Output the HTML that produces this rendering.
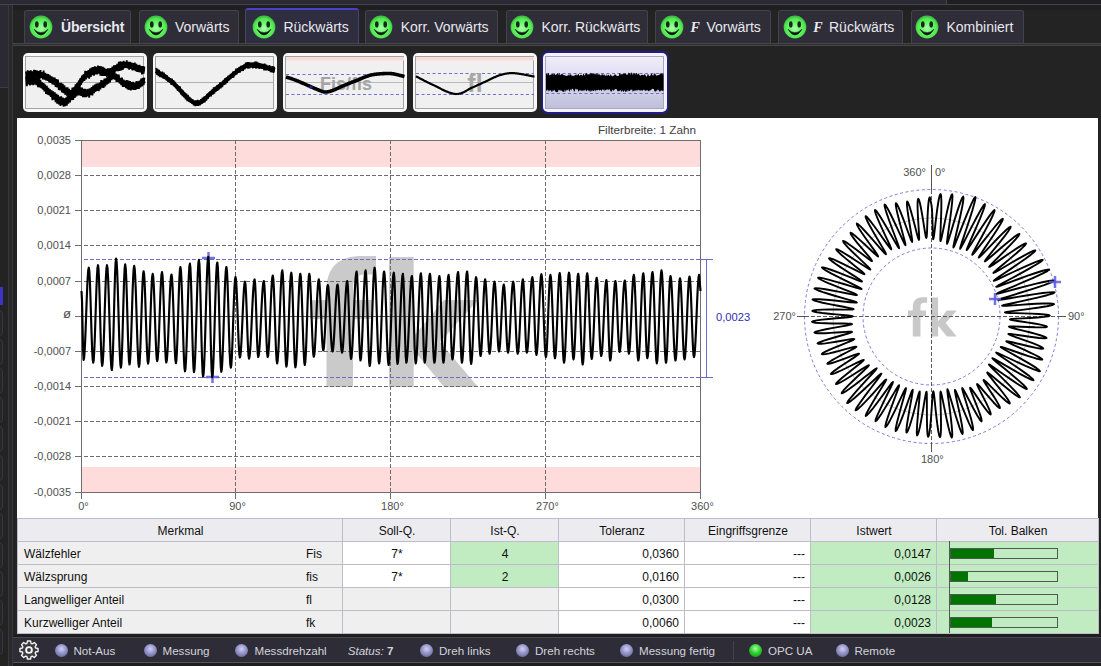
<!DOCTYPE html>
<html><head><meta charset="utf-8">
<style>
*{box-sizing:border-box}
html,body{margin:0;padding:0}
body{width:1101px;height:666px;overflow:hidden;background:#232323;position:relative;font-family:"Liberation Sans",sans-serif}
.a{position:absolute}
.tab{position:absolute;top:10px;height:33px;background:#2e2d38;border:1px solid #44434b;border-bottom:none;border-radius:3px 3px 0 0}
.tab.sel{top:8px;height:35px;background:#2f2d40;border-color:#45427a;border-top:2px solid #4a40c8}
.tl{position:absolute;top:19px;font-size:14px;color:#e8e8ee;white-space:nowrap;line-height:16px}
.smile{position:absolute;top:15px;width:23px;height:23px}
.th{position:absolute;top:53px;width:124px;height:59px;border-radius:5px;background:#f7f7f7}
.thi{position:absolute;left:3px;top:3px;width:118px;height:53px;border:1px solid #a4a4a4;background:#f0f0f0;overflow:hidden}
.st{position:absolute;top:644px;font-size:11.6px;color:#d4d4dc;white-space:nowrap;line-height:14px}
.led{position:absolute;top:643.5px;width:13px;height:13px;border-radius:50%;background:radial-gradient(circle at 50% 38%,#cfd0f4 0%,#9a9ad0 40%,#6a6a98 80%,#4a4a68 100%)}
.ax{position:absolute;font-size:11px;color:#505050;white-space:nowrap;line-height:12px}
table{border-collapse:collapse;position:absolute;left:17px;top:518px;width:1081px;table-layout:fixed;font-size:12px;color:#101010}
td{border:1px solid #bdbdc9;height:23px;padding:1px 5px 0 6px;white-space:nowrap;line-height:14px}
</style></head>
<body>
<!-- top strip -->
<div class="a" style="left:0;top:0;width:946px;height:4px;background:#2b2a32"></div>
<div class="a" style="left:0;top:4px;width:1101px;height:1px;background:#45444c"></div>
<div class="a" style="left:946px;top:0;width:1px;height:4px;background:#45444c"></div>
<div class="a" style="left:947px;top:0;width:154px;height:4px;background:#1f1f21"></div>
<div class="a" style="left:0;top:5px;width:1101px;height:5px;background:#1f1f22"></div>
<!-- left strip -->
<div class="a" style="left:0;top:5px;width:8px;height:82px;background:#2b2a33"></div>
<div class="a" style="left:0;top:87px;width:8px;height:1px;background:#3c3c40"></div>
<div class="a" style="left:0;top:88px;width:8px;height:578px;background:#232324"></div>
<div class="a" style="left:8px;top:5px;width:1px;height:661px;background:#38383c"></div>
<div class="a" style="left:9px;top:5px;width:3px;height:661px;background:#29292c"></div>
<div class="a" style="left:12px;top:5px;width:1px;height:661px;background:#38383c"></div>
<div class="a" style="left:-5px;top:310.0px;width:8px;height:26px;border:1px solid #38383c;border-radius:4px;background:#262628"></div>
<div class="a" style="left:-5px;top:339.0px;width:8px;height:26px;border:1px solid #38383c;border-radius:4px;background:#262628"></div>
<div class="a" style="left:-5px;top:368.0px;width:8px;height:26px;border:1px solid #38383c;border-radius:4px;background:#262628"></div>
<div class="a" style="left:-5px;top:397.0px;width:8px;height:26px;border:1px solid #38383c;border-radius:4px;background:#262628"></div>
<div class="a" style="left:-5px;top:426.0px;width:8px;height:26px;border:1px solid #38383c;border-radius:4px;background:#262628"></div>
<div class="a" style="left:-5px;top:455.0px;width:8px;height:26px;border:1px solid #38383c;border-radius:4px;background:#262628"></div>
<div class="a" style="left:-5px;top:484.0px;width:8px;height:26px;border:1px solid #38383c;border-radius:4px;background:#262628"></div>
<div class="a" style="left:-5px;top:513.0px;width:8px;height:26px;border:1px solid #38383c;border-radius:4px;background:#262628"></div>
<div class="a" style="left:-5px;top:542.0px;width:8px;height:26px;border:1px solid #38383c;border-radius:4px;background:#262628"></div>
<div class="a" style="left:-5px;top:571.0px;width:8px;height:26px;border:1px solid #38383c;border-radius:4px;background:#262628"></div>
<div class="a" style="left:-5px;top:600.0px;width:8px;height:26px;border:1px solid #38383c;border-radius:4px;background:#262628"></div>
<div class="a" style="left:-5px;top:629.0px;width:8px;height:26px;border:1px solid #38383c;border-radius:4px;background:#262628"></div>
<div class="a" style="left:0;top:287px;width:3px;height:18px;background:#3c34c8"></div>
<!-- tabs -->
<svg width="0" height="0" style="position:absolute"><defs><radialGradient id="sg" cx="0.5" cy="0.55" r="0.5"><stop offset="0" stop-color="#a8ffa8"/><stop offset="0.55" stop-color="#66f466"/><stop offset="0.88" stop-color="#50e450"/><stop offset="1" stop-color="#40c040"/></radialGradient></defs></svg>
<div class="tab" style="left:24px;width:107px"></div>
<svg class="a" style="left:27.5px;top:13.6px" width="26" height="26" viewBox="0 0 26 26"><circle cx="13" cy="13" r="11.4" fill="url(#sg)"/><ellipse cx="8.8" cy="10.4" rx="1.8" ry="3.1" fill="#102814"/><ellipse cx="17.2" cy="10.4" rx="1.8" ry="3.1" fill="#102814"/><path d="M6,15.2 Q13,27 20,15.2 Q13,22.2 6,15.2Z" fill="#0a160c" stroke="#0a160c" stroke-width="0.5" stroke-linejoin="round"/></svg>
<div class="tl" style="left:61px;font-weight:bold;font-size:14px;letter-spacing:-0.15px;">Übersicht</div>
<div class="tab" style="left:139px;width:100px"></div>
<svg class="a" style="left:143px;top:13.6px" width="26" height="26" viewBox="0 0 26 26"><circle cx="13" cy="13" r="11.4" fill="url(#sg)"/><ellipse cx="8.8" cy="10.4" rx="1.8" ry="3.1" fill="#102814"/><ellipse cx="17.2" cy="10.4" rx="1.8" ry="3.1" fill="#102814"/><path d="M6,15.2 Q13,27 20,15.2 Q13,22.2 6,15.2Z" fill="#0a160c" stroke="#0a160c" stroke-width="0.5" stroke-linejoin="round"/></svg>
<div class="tl" style="left:175px;">Vorwärts</div>
<div class="tab sel" style="left:245px;width:114px"></div>
<svg class="a" style="left:251px;top:13.6px" width="26" height="26" viewBox="0 0 26 26"><circle cx="13" cy="13" r="11.4" fill="url(#sg)"/><ellipse cx="8.8" cy="10.4" rx="1.8" ry="3.1" fill="#102814"/><ellipse cx="17.2" cy="10.4" rx="1.8" ry="3.1" fill="#102814"/><path d="M6,15.2 Q13,27 20,15.2 Q13,22.2 6,15.2Z" fill="#0a160c" stroke="#0a160c" stroke-width="0.5" stroke-linejoin="round"/></svg>
<div class="tl" style="left:283.4px;">Rückwärts</div>
<div class="tab" style="left:364.6px;width:133.4px"></div>
<svg class="a" style="left:368px;top:13.6px" width="26" height="26" viewBox="0 0 26 26"><circle cx="13" cy="13" r="11.4" fill="url(#sg)"/><ellipse cx="8.8" cy="10.4" rx="1.8" ry="3.1" fill="#102814"/><ellipse cx="17.2" cy="10.4" rx="1.8" ry="3.1" fill="#102814"/><path d="M6,15.2 Q13,27 20,15.2 Q13,22.2 6,15.2Z" fill="#0a160c" stroke="#0a160c" stroke-width="0.5" stroke-linejoin="round"/></svg>
<div class="tl" style="left:400.7px;">Korr. Vorwärts</div>
<div class="tab" style="left:505.5px;width:142.5px"></div>
<svg class="a" style="left:509.4px;top:13.6px" width="26" height="26" viewBox="0 0 26 26"><circle cx="13" cy="13" r="11.4" fill="url(#sg)"/><ellipse cx="8.8" cy="10.4" rx="1.8" ry="3.1" fill="#102814"/><ellipse cx="17.2" cy="10.4" rx="1.8" ry="3.1" fill="#102814"/><path d="M6,15.2 Q13,27 20,15.2 Q13,22.2 6,15.2Z" fill="#0a160c" stroke="#0a160c" stroke-width="0.5" stroke-linejoin="round"/></svg>
<div class="tl" style="left:541.5px;">Korr. Rückwärts</div>
<div class="tab" style="left:655px;width:116px"></div>
<svg class="a" style="left:659px;top:13.6px" width="26" height="26" viewBox="0 0 26 26"><circle cx="13" cy="13" r="11.4" fill="url(#sg)"/><ellipse cx="8.8" cy="10.4" rx="1.8" ry="3.1" fill="#102814"/><ellipse cx="17.2" cy="10.4" rx="1.8" ry="3.1" fill="#102814"/><path d="M6,15.2 Q13,27 20,15.2 Q13,22.2 6,15.2Z" fill="#0a160c" stroke="#0a160c" stroke-width="0.5" stroke-linejoin="round"/></svg>
<div class="tl" style="left:706.4px;">Vorwärts</div>
<div class="tab" style="left:778px;width:125px"></div>
<svg class="a" style="left:781.5px;top:13.6px" width="26" height="26" viewBox="0 0 26 26"><circle cx="13" cy="13" r="11.4" fill="url(#sg)"/><ellipse cx="8.8" cy="10.4" rx="1.8" ry="3.1" fill="#102814"/><ellipse cx="17.2" cy="10.4" rx="1.8" ry="3.1" fill="#102814"/><path d="M6,15.2 Q13,27 20,15.2 Q13,22.2 6,15.2Z" fill="#0a160c" stroke="#0a160c" stroke-width="0.5" stroke-linejoin="round"/></svg>
<div class="tl" style="left:829px;">Rückwärts</div>
<div class="tab" style="left:911px;width:113px"></div>
<svg class="a" style="left:914.3px;top:13.6px" width="26" height="26" viewBox="0 0 26 26"><circle cx="13" cy="13" r="11.4" fill="url(#sg)"/><ellipse cx="8.8" cy="10.4" rx="1.8" ry="3.1" fill="#102814"/><ellipse cx="17.2" cy="10.4" rx="1.8" ry="3.1" fill="#102814"/><path d="M6,15.2 Q13,27 20,15.2 Q13,22.2 6,15.2Z" fill="#0a160c" stroke="#0a160c" stroke-width="0.5" stroke-linejoin="round"/></svg>
<div class="tl" style="left:946.5px;">Kombiniert</div>
<div class="tl" style="left:690.5px;top:19.5px;font-family:Liberation Serif;font-style:italic;font-weight:bold;font-size:14px">F</div>
<div class="tl" style="left:813.3px;top:19.5px;font-family:Liberation Serif;font-style:italic;font-weight:bold;font-size:14px">F</div>
<div class="a" style="left:13px;top:43px;width:1088px;height:1px;background:#45454a"></div>
<div class="a" style="left:13px;top:44px;width:1088px;height:1px;background:#2e2e31"></div>
<div class="a" style="left:13px;top:45px;width:1088px;height:1px;background:#45454a"></div>
<!-- thumbnails -->
<svg class="a" style="left:0;top:0" width="700" height="120" viewBox="0 0 700 120">
<defs><linearGradient id="selg" x1="0" y1="0" x2="0" y2="1"><stop offset="0" stop-color="#f2eefa"/><stop offset="1" stop-color="#bfbfdc"/></linearGradient></defs>
<rect x="23" y="53" width="124" height="59" rx="5" fill="#f8f8f8"/>
<rect x="25.5" y="56.5" width="118" height="52" fill="#f0f0f0" stroke="#a4a4a4" stroke-width="1"/>
<rect x="153" y="53" width="124" height="59" rx="5" fill="#f8f8f8"/>
<rect x="155.5" y="56.5" width="118" height="52" fill="#f0f0f0" stroke="#a4a4a4" stroke-width="1"/>
<rect x="283" y="53" width="124" height="59" rx="5" fill="#f8f8f8"/>
<rect x="285.5" y="56.5" width="118" height="52" fill="#f0f0f0" stroke="#a4a4a4" stroke-width="1"/>
<rect x="413" y="53" width="124" height="59" rx="5" fill="#f8f8f8"/>
<rect x="415.5" y="56.5" width="118" height="52" fill="#f0f0f0" stroke="#a4a4a4" stroke-width="1"/>
<rect x="541.5" y="51" width="127" height="63" rx="6.5" fill="#221c8a"/>
<rect x="543" y="53" width="124" height="59" rx="5" fill="#f4f2fc"/>
<rect x="545.5" y="56.5" width="118" height="52" fill="url(#selg)" stroke="#a8a8bc" stroke-width="1"/>
<line x1="26" y1="82.5" x2="144" y2="82.5" stroke="#b0b0b0" stroke-width="1"/>
<path d="M26,71.53 26.8,79.48 27.6,70.24 28.4,78.25 29.2,70.72 30,78.58 30.8,70.35 31.6,79.2 32.4,71.41 33.2,77.64 34,69.9 34.8,78.42 35.6,70.03 36.4,77.56 37.2,70.68 38,79.04 38.8,71.18 39.6,79.59 40.4,69.98 41.2,77.98 42,72.02 42.8,79.36 43.6,70.64 44.4,79.58 45.2,72.73 46,80.4 46.8,73.92 47.6,80.87 48.4,74 49.2,82.32 50,75.34 50.8,82.78 51.6,76.43 52.4,84.35 53.2,77.44 54,84.66 54.8,77.55 55.6,86.95 56.4,79.16 57.2,87.42 58,79.69 58.8,90.04 59.6,82.74 60.4,90.31 61.2,82.87 62,92.4 62.8,83.76 63.6,93.11 64.4,85.21 65.2,94.77 66,87.37 66.8,95.72 67.6,87.33 68.4,97.29 69.2,88.94 70,97.29 70.8,89.98 71.6,96.23 72.4,87.63 73.2,95.36 74,87.34 74.8,93.85 75.6,84.35 76.4,92.1 77.2,83 78,89.54 78.8,80.47 79.6,87.82 80.4,77.98 81.2,84.57 82,75.61 82.8,81.52 83.6,74.36 84.4,81 85.2,70.91 86,79.47 86.8,71 87.6,77.71 88.4,69.98 89.2,78.57 90,68.66 90.8,76.8 91.6,67.46 92.4,75.1 93.2,67.13 94,75.69 94.8,66.37 95.6,74.29 96.4,66.76 97.2,74.42 98,65.5 98.8,73.57 99.6,66.17 100.4,75.57 101.2,66.37 102,75.83 102.8,66.94 103.6,75.81 104.4,67.84 105.2,75.99 106,69.17 106.8,77.13 107.6,68.31 108.4,75.84 109.2,68.32 110,76.07 110.8,68.05 111.6,75.01 112.4,66.7 113.2,74.4 114,65.26 114.8,72.75 115.6,65.17 116.4,71.17 117.2,63.96 118,71.12 118.8,61.89 119.6,70.89 120.4,61.39 121.2,70.35 122,61.96 122.8,69.95 123.6,60.75 124.4,68.14 125.2,61.87 126,67.92 126.8,60.41 127.6,68.51 128.4,61.93 129.2,69.57 130,61.83 130.8,68.89 131.6,62.67 132.4,70.29 133.2,63.14 134,70.27 134.8,62.56 135.6,71.17 136.4,63.91 137.2,71.8 138,65.1 138.8,72.23 139.6,64.93 140.4,72.46 141.2,66.18 142,74.52 142.8,66.01 143.6,73.77 144.4,66.45" fill="none" stroke="#000" stroke-width="1.8" stroke-linejoin="miter" stroke-miterlimit="2"/>
<path d="M26,76.49 26.8,86.25 27.6,78.17 28.4,84.36 29.2,76.44 30,85.51 30.8,76.64 31.6,84.55 32.4,76.7 33.2,85.13 34,76.79 34.8,84.35 35.6,77.31 36.4,85.19 37.2,77.29 38,87.16 38.8,77.79 39.6,87.39 40.4,80.08 41.2,88.24 42,82.4 42.8,89.3 43.6,83.08 44.4,91.38 45.2,84.67 46,93.94 46.8,85.84 47.6,94.77 48.4,87.94 49.2,95.23 50,89.29 50.8,96.96 51.6,90.38 52.4,100.09 53.2,91.39 54,99.73 54.8,92.2 55.6,102.18 56.4,93.71 57.2,103.56 58,94.78 58.8,104.43 59.6,96.66 60.4,105.81 61.2,96.38 62,105.03 62.8,97.55 63.6,106.7 64.4,98.34 65.2,106.1 66,97.6 66.8,105.65 67.6,95.87 68.4,103.66 69.2,94.55 70,102.36 70.8,92.14 71.6,100.21 72.4,91.5 73.2,99.85 74,89.95 74.8,97.79 75.6,89.84 76.4,96.46 77.2,88 78,95.45 78.8,87.16 79.6,95.52 80.4,87.29 81.2,95.95 82,87.67 82.8,97.23 83.6,88.96 84.4,97.05 85.2,88.74 86,97.25 86.8,89.46 87.6,96.46 88.4,88.93 89.2,97.64 90,88.25 90.8,95.27 91.6,87 92.4,95.52 93.2,85.63 94,93.19 94.8,84.69 95.6,91.69 96.4,83.69 97.2,90.99 98,83.45 98.8,91.11 99.6,82.61 100.4,89.32 101.2,80.03 102,87.68 102.8,80.23 103.6,87.86 104.4,78.7 105.2,86.42 106,78.35 106.8,84.55 107.6,76.84 108.4,83.74 109.2,75.29 110,82.32 110.8,73.41 111.6,80.27 112.4,72.48 113.2,79.05 114,71.17 114.8,79.56 115.6,73.44 116.4,81.83 117.2,74.37 118,81.93 118.8,74.58 119.6,83.54 120.4,77.79 121.2,85.09 122,77.66 122.8,86.86 123.6,79.64 124.4,87.01 125.2,80.72 126,88.11 126.8,80.07 127.6,89.43 128.4,80.46 129.2,90.03 130,80.99 130.8,90.3 131.6,82.07 132.4,89.56 133.2,81.84 134,89.81 134.8,82.94 135.6,89.96 136.4,81.19 137.2,89.01 138,81.31 138.8,88.89 139.6,80.59 140.4,87.35 141.2,78.52 142,86.29 142.8,77.86 143.6,85.2 144.4,77.64" fill="none" stroke="#000" stroke-width="1.8" stroke-linejoin="miter" stroke-miterlimit="2"/>
<path d="M26,74.8 26.27,74.8 26.58,74.79 26.93,74.78 27.31,74.77 27.72,74.76 28.16,74.74 28.63,74.73 29.12,74.71 29.64,74.69 30.17,74.67 30.72,74.65 31.28,74.63 31.85,74.62 32.44,74.6 33.03,74.59 33.62,74.57 34.21,74.57 34.81,74.56 35.39,74.56 35.98,74.56 36.55,74.56 37.11,74.57 37.66,74.59 38.19,74.61 38.7,74.63 39.19,74.66 39.65,74.7 40.09,74.75 40.5,74.8 41.19,74.91 41.83,75.04 42.44,75.18 43.01,75.33 43.55,75.5 44.07,75.69 44.57,75.88 45.04,76.09 45.51,76.31 45.97,76.53 46.42,76.77 46.88,77.02 47.34,77.28 47.81,77.55 48.3,77.82 48.8,78.1 49.32,78.39 49.83,78.7 50.34,79.02 50.85,79.36 51.37,79.7 51.88,80.06 52.39,80.42 52.9,80.79 53.41,81.17 53.92,81.56 54.43,81.94 54.95,82.34 55.46,82.73 55.97,83.12 56.48,83.51 57,83.9 57.52,84.3 58.05,84.71 58.59,85.15 59.13,85.59 59.67,86.04 60.22,86.5 60.76,86.95 61.31,87.41 61.84,87.85 62.37,88.29 62.89,88.71 63.41,89.12 63.9,89.5 64.39,89.87 64.85,90.2 65.3,90.5 65.91,90.91 66.49,91.32 67.03,91.71 67.55,92.07 68.05,92.39 68.54,92.67 69.01,92.89 69.49,93.04 69.98,93.12 70.48,93.11 71,93 71.49,92.81 71.97,92.54 72.46,92.19 72.94,91.78 73.43,91.31 73.92,90.78 74.41,90.21 74.91,89.61 75.42,88.98 75.94,88.33 76.46,87.67 77,87 77.47,86.39 77.96,85.73 78.45,85.01 78.96,84.25 79.47,83.47 79.98,82.67 80.5,81.86 81.02,81.06 81.53,80.28 82.04,79.52 82.55,78.8 83.04,78.14 83.53,77.53 84,77 84.53,76.46 85.05,76 85.56,75.59 86.06,75.24 86.55,74.93 87.04,74.66 87.52,74.41 88.01,74.17 88.5,73.94 88.99,73.71 89.49,73.47 90,73.2 90.5,72.91 90.97,72.61 91.43,72.29 91.88,71.98 92.33,71.67 92.8,71.38 93.29,71.11 93.81,70.86 94.37,70.65 94.98,70.48 95.66,70.36 96.4,70.3 96.81,70.3 97.24,70.32 97.69,70.37 98.17,70.44 98.66,70.53 99.18,70.64 99.7,70.76 100.24,70.89 100.8,71.03 101.35,71.18 101.92,71.33 102.49,71.48 103.06,71.63 103.63,71.78 104.19,71.91 104.76,72.04 105.31,72.16 105.85,72.26 106.39,72.34 106.91,72.4 107.41,72.44 107.89,72.46 108.36,72.44 108.8,72.4 109.43,72.28 110.03,72.1 110.6,71.87 111.14,71.59 111.67,71.28 112.18,70.94 112.67,70.57 113.16,70.19 113.63,69.8 114.1,69.4 114.57,69.02 115.04,68.64 115.52,68.28 116,67.95 116.49,67.66 117,67.4 117.52,67.17 118.03,66.94 118.55,66.72 119.07,66.5 119.59,66.29 120.11,66.09 120.62,65.91 121.14,65.73 121.66,65.57 122.18,65.42 122.7,65.29 123.22,65.17 123.74,65.07 124.26,64.99 124.78,64.94 125.3,64.9 125.81,64.89 126.32,64.9 126.82,64.92 127.31,64.97 127.81,65.04 128.3,65.12 128.79,65.22 129.29,65.34 129.79,65.46 130.3,65.6 130.81,65.75 131.34,65.91 131.88,66.07 132.44,66.24 133.01,66.42 133.6,66.6 134.07,66.75 134.58,66.91 135.12,67.1 135.67,67.29 136.25,67.5 136.84,67.72 137.44,67.94 138.05,68.17 138.66,68.4 139.27,68.64 139.87,68.87 140.45,69.1 141.03,69.33 141.58,69.55 142.1,69.76 142.6,69.96 143.07,70.14 143.49,70.31 143.88,70.46 144.21,70.59 144.5,70.7" fill="none" stroke="#000" stroke-width="4.4"/>
<path d="M26,81.4 26.29,81.39 26.63,81.37 27.02,81.34 27.45,81.29 27.92,81.25 28.42,81.19 28.95,81.14 29.51,81.08 30.09,81.03 30.68,80.99 31.28,80.95 31.89,80.92 32.5,80.91 33.11,80.91 33.7,80.94 34.29,80.98 34.85,81.04 35.4,81.13 35.92,81.25 36.4,81.4 36.98,81.63 37.54,81.9 38.09,82.22 38.62,82.56 39.15,82.94 39.67,83.35 40.18,83.78 40.69,84.23 41.19,84.69 41.69,85.17 42.18,85.65 42.68,86.13 43.18,86.61 43.68,87.09 44.19,87.55 44.7,88 45.22,88.45 45.73,88.91 46.24,89.37 46.75,89.85 47.27,90.33 47.78,90.82 48.29,91.31 48.8,91.8 49.31,92.29 49.82,92.77 50.33,93.25 50.85,93.72 51.36,94.19 51.87,94.64 52.38,95.08 52.9,95.5 53.42,95.92 53.96,96.34 54.51,96.77 55.07,97.19 55.63,97.61 56.19,98.02 56.75,98.43 57.31,98.82 57.85,99.21 58.39,99.57 58.91,99.92 59.42,100.25 59.9,100.55 60.36,100.83 60.8,101.08 61.2,101.3 61.91,101.66 62.52,101.94 63.04,102.14 63.51,102.26 63.94,102.31 64.37,102.27 64.81,102.17 65.3,102 65.79,101.74 66.25,101.37 66.69,100.92 67.14,100.41 67.63,99.84 68.17,99.24 68.78,98.62 69.5,98 69.91,97.67 70.35,97.32 70.82,96.93 71.31,96.52 71.83,96.1 72.37,95.67 72.91,95.23 73.47,94.8 74.03,94.38 74.59,93.97 75.14,93.59 75.69,93.23 76.22,92.9 76.74,92.62 77.23,92.38 77.7,92.2 78.29,92.04 78.86,91.97 79.42,91.97 79.95,92.03 80.47,92.13 80.99,92.27 81.49,92.42 81.99,92.59 82.49,92.74 82.99,92.87 83.49,92.96 84,93 84.51,93.02 85.01,93.04 85.51,93.06 86.01,93.08 86.5,93.09 86.99,93.08 87.49,93.06 87.98,93.01 88.48,92.94 88.98,92.83 89.49,92.69 90,92.5 90.51,92.27 90.99,92.02 91.47,91.72 91.94,91.4 92.42,91.06 92.91,90.68 93.41,90.28 93.93,89.86 94.49,89.42 95.08,88.96 95.71,88.49 96.4,88 96.82,87.71 97.27,87.4 97.75,87.07 98.24,86.74 98.76,86.39 99.29,86.03 99.83,85.66 100.38,85.29 100.94,84.91 101.51,84.53 102.07,84.15 102.63,83.76 103.19,83.38 103.74,83 104.27,82.63 104.8,82.27 105.3,81.91 105.79,81.56 106.25,81.23 106.69,80.91 107.1,80.6 107.8,80.01 108.42,79.38 108.97,78.75 109.46,78.11 109.93,77.51 110.37,76.94 110.81,76.45 111.27,76.04 111.76,75.73 112.3,75.54 112.9,75.5 113.35,75.57 113.82,75.72 114.3,75.95 114.8,76.24 115.31,76.59 115.83,76.98 116.36,77.41 116.89,77.87 117.43,78.34 117.98,78.83 118.52,79.31 119.07,79.79 119.61,80.24 120.15,80.67 120.68,81.06 121.2,81.4 121.72,81.72 122.24,82.04 122.76,82.35 123.28,82.67 123.8,82.98 124.32,83.28 124.84,83.58 125.36,83.87 125.88,84.14 126.39,84.41 126.91,84.65 127.43,84.89 127.95,85.1 128.47,85.29 128.98,85.46 129.5,85.6 130.02,85.72 130.54,85.84 131.06,85.93 131.59,86.01 132.12,86.08 132.64,86.13 133.17,86.16 133.69,86.17 134.21,86.17 134.73,86.15 135.24,86.11 135.75,86.05 136.25,85.97 136.74,85.87 137.23,85.75 137.7,85.6 138.29,85.37 138.89,85.06 139.5,84.69 140.12,84.27 140.73,83.81 141.32,83.34 141.9,82.86 142.44,82.39 142.95,81.93 143.42,81.51 143.84,81.14 144.2,80.83 144.5,80.6" fill="none" stroke="#000" stroke-width="4.4"/>
<line x1="156" y1="82.5" x2="274" y2="82.5" stroke="#b0b0b0" stroke-width="1"/>
<path d="M156,71 156.26,71.18 156.55,71.37 156.85,71.57 157.18,71.78 157.53,72 157.9,72.24 158.29,72.49 158.7,72.74 159.13,73.01 159.57,73.29 160.03,73.58 160.5,73.88 160.99,74.19 161.49,74.51 162.01,74.84 162.54,75.19 163.08,75.54 163.63,75.9 164.19,76.28 164.75,76.66 165.33,77.05 165.92,77.45 166.51,77.87 167.1,78.29 167.71,78.72 168.31,79.16 168.92,79.61 169.54,80.07 170.15,80.54 170.77,81.02 171.38,81.5 172,82 172.43,82.36 172.88,82.74 173.33,83.15 173.79,83.58 174.25,84.02 174.73,84.49 175.21,84.97 175.7,85.47 176.2,85.98 176.7,86.5 177.21,87.04 177.72,87.59 178.24,88.14 178.76,88.71 179.29,89.28 179.82,89.85 180.35,90.43 180.89,91.02 181.43,91.6 181.97,92.18 182.51,92.76 183.06,93.34 183.6,93.92 184.14,94.49 184.69,95.05 185.23,95.61 185.78,96.15 186.32,96.69 186.86,97.21 187.4,97.72 187.93,98.22 188.47,98.69 189,99.16 189.52,99.6 190.04,100.02 190.56,100.43 191.07,100.81 191.58,101.16 192.08,101.49 192.58,101.8 193.07,102.08 193.55,102.32 194.02,102.54 194.49,102.73 194.95,102.88 195.4,103 195.98,103.11 196.54,103.18 197.08,103.2 197.61,103.19 198.13,103.14 198.64,103.05 199.13,102.92 199.62,102.76 200.1,102.57 200.57,102.35 201.03,102.1 201.49,101.82 201.94,101.51 202.39,101.18 202.83,100.83 203.28,100.46 203.73,100.06 204.17,99.65 204.62,99.22 205.08,98.77 205.53,98.31 206,97.84 206.46,97.36 206.94,96.87 207.43,96.37 207.92,95.86 208.43,95.35 208.95,94.84 209.48,94.33 210.02,93.81 210.58,93.3 211.16,92.79 211.75,92.29 212.37,91.79 213,91.3 213.42,90.98 213.86,90.64 214.3,90.3 214.75,89.94 215.22,89.57 215.69,89.19 216.17,88.8 216.66,88.39 217.16,87.98 217.66,87.57 218.18,87.14 218.7,86.71 219.22,86.26 219.75,85.82 220.29,85.36 220.83,84.9 221.37,84.44 221.92,83.97 222.47,83.5 223.02,83.03 223.58,82.55 224.14,82.07 224.7,81.59 225.26,81.11 225.83,80.63 226.39,80.15 226.95,79.67 227.51,79.19 228.07,78.71 228.63,78.24 229.19,77.77 229.74,77.3 230.29,76.83 230.84,76.37 231.39,75.92 231.93,75.47 232.46,75.03 232.99,74.59 233.52,74.16 234.03,73.74 234.55,73.33 235.05,72.93 235.55,72.54 236.04,72.15 236.52,71.78 236.99,71.42 237.45,71.07 237.91,70.73 238.35,70.41 238.78,70.1 239.21,69.8 239.62,69.52 240.01,69.25 240.4,69 241.14,68.53 241.83,68.1 242.48,67.7 243.09,67.34 243.66,67.01 244.21,66.71 244.72,66.44 245.21,66.19 245.68,65.98 246.13,65.79 246.56,65.62 246.98,65.47 247.4,65.35 247.8,65.24 248.21,65.16 248.61,65.09 249.02,65.03 249.43,64.99 249.85,64.96 250.29,64.94 250.75,64.93 251.22,64.93 251.72,64.94 252.24,64.95 252.79,64.96 253.38,64.98 254,65 254.42,65.02 254.86,65.05 255.32,65.09 255.8,65.15 256.29,65.21 256.8,65.29 257.31,65.37 257.85,65.46 258.39,65.57 258.94,65.68 259.5,65.79 260.07,65.92 260.65,66.05 261.23,66.19 261.81,66.33 262.4,66.47 262.99,66.62 263.58,66.78 264.17,66.93 264.76,67.09 265.35,67.25 265.93,67.41 266.51,67.57 267.08,67.73 267.64,67.9 268.2,68.06 268.75,68.21 269.28,68.37 269.8,68.52 270.31,68.67 270.81,68.82 271.29,68.96 271.76,69.1 272.2,69.23 272.63,69.35 273.04,69.47 273.42,69.58 273.79,69.68 274.13,69.78 274.45,69.86 274.74,69.94 275,70" fill="none" stroke="#000" stroke-width="4.2" stroke-linejoin="round"/>
<path d="M156,67.92 156.8,74.78 157.6,68.72 158.4,76.09 159.2,69.81 160,77.07 160.8,71.85 161.6,77.43 162.4,71.56 163.2,78.74 164,72.67 164.8,79.03 165.6,74.38 166.4,80.32 167.2,75.39 168,81.94 168.8,77.33 169.6,82.61 170.4,78.15 171.2,84.86 172,78.71 172.8,85.08 173.6,80.07 174.4,86.54 175.2,81.89 176,88.13 176.8,84.43 177.6,90.9 178.4,85.84 179.2,91.67 180,86.45 180.8,94.36 181.6,89.19 182.4,96.21 183.2,90.54 184,97.5 184.8,92.69 185.6,99.51 186.4,93.59 187.2,101.11 188,94.8 188.8,101.59 189.6,96.97 190.4,102.72 191.2,98.51 192,103.71 192.8,99.32 193.6,105.4 194.4,100.51 195.2,106.11 196,100.45 196.8,105.82 197.6,99.83 198.4,105.96 199.2,100.27 200,105.48 200.8,99.03 201.6,104 202.4,97.58 203.2,102.73 204,96.55 204.8,102.44 205.6,96.04 206.4,100.74 207.2,93.9 208,98.8 208.8,92.8 209.6,96.45 210.4,91.03 211.2,96.32 212,89.63 212.8,94.73 213.6,87.32 214.4,93.76 215.2,86.91 216,91.62 216.8,85.35 217.6,90.92 218.4,84.62 219.2,89.54 220,82.27 220.8,88.35 221.6,82.02 222.4,87.11 223.2,80.57 224,84.86 224.8,78.45 225.6,84.33 226.4,77.47 227.2,82.97 228,75.81 228.8,80.72 229.6,74.78 230.4,79.18 231.2,73.79 232,77.8 232.8,71.58 233.6,77.72 234.4,71.04 235.2,75.06 236,68.58 236.8,74.51 237.6,68.2 238.4,72.89 239.2,66.77 240,72.63 240.8,65.91 241.6,71.03 242.4,65.49 243.2,70.78 244,64.6 244.8,69.29 245.6,62.62 246.4,68.04 247.2,62.17 248,68.75 248.8,61.97 249.6,68.29 250.4,62.61 251.2,67.74 252,62.55 252.8,68.36 253.6,62.39 254.4,67.85 255.2,61.46 256,68.58 256.8,61.7 257.6,68.25 258.4,62.69 259.2,68.96 260,63.03 260.8,68.68 261.6,63.51 262.4,68.86 263.2,63.95 264,70.49 264.8,63.53 265.6,70.4 266.4,64.64 267.2,70.43 268,65.69 268.8,70.8 269.6,65.15 270.4,72.13 271.2,66.23 272,72.48 272.8,66.1 273.6,72.81 274.4,66.71" fill="none" stroke="#000" stroke-width="1.5" stroke-linejoin="miter" stroke-miterlimit="2"/>
<rect x="286" y="57" width="118" height="3.5" fill="#f8dcd8"/>
<line x1="286" y1="82.5" x2="404" y2="82.5" stroke="#b8b8b8" stroke-width="1"/>
<line x1="286" y1="74.5" x2="404" y2="74.5" stroke="#7070cc" stroke-width="1" stroke-dasharray="3,2.5"/>
<line x1="286" y1="94.5" x2="404" y2="94.5" stroke="#7070cc" stroke-width="1" stroke-dasharray="3,2.5"/>
<text x="346" y="89.5" font-family="Liberation Sans" font-weight="bold" font-size="18" fill="#a4a4a4" text-anchor="middle">Fis/fis</text>
<path d="M286,77 286.28,77.09 286.6,77.19 286.96,77.3 287.35,77.42 287.77,77.54 288.23,77.68 288.71,77.83 289.23,77.98 289.76,78.15 290.32,78.33 290.9,78.51 291.5,78.71 292.12,78.91 292.75,79.13 293.4,79.36 294.06,79.59 294.73,79.84 295.4,80.1 295.82,80.26 296.25,80.44 296.7,80.62 297.16,80.81 297.64,81 298.13,81.21 298.63,81.42 299.14,81.63 299.66,81.85 300.19,82.07 300.72,82.3 301.26,82.53 301.8,82.77 302.34,83 302.89,83.24 303.43,83.47 303.98,83.71 304.52,83.95 305.06,84.18 305.59,84.41 306.12,84.65 306.64,84.87 307.15,85.1 307.66,85.31 308.15,85.53 308.63,85.74 309.09,85.94 309.55,86.13 309.98,86.32 310.4,86.5 311.04,86.77 311.66,87.04 312.26,87.3 312.85,87.56 313.42,87.81 313.97,88.06 314.51,88.3 315.04,88.53 315.55,88.75 316.05,88.97 316.53,89.18 317,89.39 317.46,89.58 317.91,89.77 318.35,89.95 318.78,90.13 319.19,90.29 319.6,90.45 320,90.6 320.7,90.86 321.33,91.1 321.88,91.31 322.4,91.49 322.88,91.64 323.34,91.77 323.81,91.87 324.3,91.94 324.82,91.99 325.4,92 325.87,91.99 326.33,91.97 326.79,91.94 327.26,91.88 327.73,91.82 328.22,91.73 328.71,91.63 329.23,91.51 329.77,91.37 330.33,91.21 330.92,91.03 331.54,90.82 332.2,90.6 332.62,90.45 333.06,90.28 333.51,90.11 333.96,89.92 334.43,89.73 334.91,89.52 335.4,89.31 335.89,89.09 336.4,88.86 336.91,88.62 337.43,88.39 337.96,88.14 338.49,87.9 339.04,87.65 339.59,87.4 340.14,87.15 340.7,86.89 341.27,86.64 341.84,86.39 342.42,86.14 343,85.9 343.46,85.71 343.92,85.52 344.39,85.32 344.87,85.13 345.36,84.93 345.85,84.73 346.35,84.52 346.85,84.32 347.35,84.11 347.86,83.91 348.37,83.7 348.89,83.49 349.41,83.29 349.93,83.08 350.45,82.87 350.98,82.66 351.5,82.45 352.03,82.24 352.55,82.03 353.08,81.82 353.6,81.62 354.12,81.41 354.64,81.21 355.16,81 355.68,80.8 356.19,80.6 356.7,80.4 357.21,80.2 357.72,80 358.22,79.79 358.73,79.58 359.24,79.37 359.75,79.16 360.25,78.94 360.76,78.73 361.27,78.51 361.78,78.3 362.29,78.08 362.79,77.87 363.3,77.66 363.81,77.45 364.32,77.25 364.83,77.05 365.33,76.85 365.84,76.66 366.35,76.47 366.86,76.28 367.36,76.11 367.87,75.94 368.38,75.77 368.88,75.62 369.39,75.47 369.89,75.33 370.4,75.2 370.91,75.08 371.42,74.96 371.94,74.85 372.46,74.75 372.98,74.66 373.51,74.57 374.04,74.48 374.56,74.4 375.09,74.33 375.62,74.26 376.15,74.2 376.68,74.14 377.2,74.08 377.72,74.03 378.24,73.98 378.76,73.94 379.27,73.9 379.77,73.86 380.27,73.82 380.77,73.79 381.26,73.76 381.73,73.73 382.21,73.7 382.67,73.67 383.12,73.65 383.57,73.62 384,73.6 384.59,73.57 385.17,73.54 385.71,73.52 386.24,73.5 386.75,73.48 387.25,73.47 387.74,73.47 388.21,73.47 388.68,73.48 389.14,73.49 389.6,73.51 390.07,73.53 390.53,73.56 391,73.6 391.47,73.65 391.96,73.7 392.46,73.76 392.97,73.83 393.5,73.9 393.98,73.98 394.48,74.07 395.01,74.17 395.56,74.28 396.12,74.4 396.69,74.54 397.27,74.67 397.85,74.82 398.44,74.97 399.02,75.12 399.59,75.27 400.16,75.42 400.71,75.57 401.25,75.72 401.76,75.86 402.25,75.99 402.72,76.12 403.15,76.24 403.55,76.35 403.91,76.45 404.23,76.53 404.5,76.6" fill="none" stroke="#000" stroke-width="3.6" stroke-linejoin="round"/>
<circle cx="311" cy="87" r="1.8" fill="#2020a0"/>
<rect x="416" y="57" width="118" height="3.5" fill="#f8dcd8"/>
<line x1="416" y1="82.5" x2="534" y2="82.5" stroke="#b8b8b8" stroke-width="1"/>
<line x1="416" y1="73.5" x2="534" y2="73.5" stroke="#7070cc" stroke-width="1" stroke-dasharray="3,2.5"/>
<line x1="416" y1="94.5" x2="534" y2="94.5" stroke="#7070cc" stroke-width="1" stroke-dasharray="3,2.5"/>
<text x="475" y="92" font-family="Liberation Sans" font-weight="bold" font-size="25" fill="#a8a8a8" text-anchor="middle">fl</text>
<path d="M416,76.3 416.27,76.44 416.55,76.58 416.87,76.75 417.2,76.92 417.56,77.11 417.93,77.31 418.33,77.52 418.75,77.74 419.18,77.97 419.63,78.21 420.1,78.46 420.58,78.72 421.08,78.98 421.59,79.25 422.11,79.53 422.65,79.81 423.2,80.09 423.76,80.38 424.32,80.67 424.9,80.97 425.48,81.27 426.08,81.57 426.67,81.87 427.28,82.17 427.89,82.47 428.5,82.76 429.11,83.06 429.73,83.36 430.35,83.65 430.97,83.94 431.58,84.22 432.2,84.5 432.63,84.7 433.07,84.9 433.52,85.11 433.98,85.34 434.45,85.56 434.92,85.8 435.4,86.03 435.89,86.28 436.38,86.53 436.88,86.78 437.39,87.04 437.89,87.3 438.41,87.56 438.93,87.82 439.45,88.09 439.97,88.35 440.5,88.62 441.03,88.88 441.56,89.15 442.1,89.41 442.64,89.67 443.17,89.93 443.71,90.19 444.25,90.44 444.79,90.69 445.33,90.93 445.87,91.17 446.4,91.4 446.94,91.63 447.47,91.85 448,92.06 448.53,92.27 449.05,92.46 449.57,92.65 450.09,92.83 450.6,93 451.11,93.15 451.61,93.3 452.11,93.43 452.6,93.56 453.08,93.66 453.56,93.76 454.03,93.84 454.5,93.91 454.95,93.96 455.4,94 455.98,94.03 456.55,94.02 457.12,94 457.69,93.95 458.24,93.88 458.79,93.79 459.34,93.67 459.88,93.54 460.42,93.39 460.95,93.23 461.48,93.05 462,92.85 462.52,92.64 463.03,92.42 463.54,92.19 464.04,91.96 464.54,91.71 465.04,91.45 465.53,91.19 466.02,90.93 466.51,90.66 466.99,90.39 467.47,90.12 467.95,89.84 468.42,89.57 468.89,89.31 469.36,89.04 469.82,88.78 470.28,88.53 470.74,88.28 471.2,88.04 471.65,87.82 472.1,87.6 472.55,87.39 473,87.2 473.57,86.96 474.14,86.72 474.69,86.48 475.24,86.25 475.78,86.01 476.31,85.78 476.83,85.54 477.35,85.31 477.86,85.08 478.36,84.85 478.86,84.62 479.36,84.39 479.85,84.16 480.34,83.94 480.83,83.71 481.31,83.48 481.79,83.26 482.28,83.03 482.76,82.8 483.25,82.58 483.73,82.35 484.22,82.13 484.71,81.9 485.2,81.68 485.7,81.45 486.2,81.23 486.7,81 487.21,80.77 487.72,80.54 488.22,80.3 488.73,80.06 489.24,79.82 489.75,79.57 490.25,79.33 490.76,79.08 491.27,78.83 491.78,78.58 492.29,78.33 492.79,78.09 493.3,77.85 493.81,77.61 494.32,77.37 494.83,77.13 495.33,76.91 495.84,76.68 496.35,76.46 496.86,76.25 497.36,76.05 497.87,75.85 498.38,75.66 498.88,75.48 499.39,75.31 499.89,75.15 500.4,75 500.9,74.86 501.39,74.72 501.88,74.59 502.36,74.46 502.83,74.34 503.3,74.22 503.76,74.11 504.22,74 504.69,73.9 505.15,73.8 505.61,73.71 506.07,73.63 506.54,73.55 507.01,73.48 507.49,73.41 507.97,73.35 508.46,73.3 508.96,73.26 509.47,73.22 509.99,73.19 510.52,73.17 511.06,73.15 511.62,73.15 512.19,73.15 512.77,73.16 513.38,73.17 514,73.2 514.43,73.22 514.87,73.25 515.33,73.29 515.81,73.34 516.31,73.39 516.82,73.45 517.34,73.52 517.88,73.59 518.42,73.66 518.98,73.74 519.54,73.83 520.12,73.92 520.69,74.01 521.28,74.11 521.86,74.21 522.45,74.31 523.04,74.41 523.63,74.52 524.22,74.62 524.81,74.73 525.39,74.84 525.97,74.95 526.54,75.06 527.11,75.17 527.67,75.28 528.22,75.39 528.75,75.49 529.28,75.59 529.79,75.7 530.29,75.8 530.77,75.89 531.24,75.98 531.69,76.07 532.12,76.16 532.53,76.24 532.92,76.31 533.28,76.38 533.63,76.45 533.94,76.5 534.24,76.56 534.5,76.6" fill="none" stroke="#000" stroke-width="2.2" stroke-linejoin="round"/>
<line x1="546" y1="73.5" x2="664" y2="73.5" stroke="#7070cc" stroke-width="1" stroke-dasharray="3,2.5"/>
<line x1="546" y1="93.5" x2="664" y2="93.5" stroke="#7070cc" stroke-width="1" stroke-dasharray="3,2.5"/>
<path d="M546,73.71 546.7,74.02 547.4,74.71 548.1,72.79 548.8,73.45 549.5,75.58 550.2,75.04 550.9,74.38 551.6,74.32 552.3,73.94 553,74.35 553.7,74.58 554.4,73.19 555.1,74.88 555.8,74.44 556.5,74.44 557.2,73.51 557.9,73.69 558.6,75.03 559.3,72.86 560,75.4 560.7,74.45 561.4,74.17 562.1,73.77 562.8,74.55 563.5,74.93 564.2,75.54 564.9,75.07 565.6,75.72 566.3,75.94 567,75.45 567.7,75.87 568.4,74.3 569.1,76.08 569.8,73.84 570.5,74.85 571.2,74.54 571.9,76.31 572.6,75.55 573.3,75.87 574,76.36 574.7,75.22 575.4,74.62 576.1,75.46 576.8,74.21 577.5,75.4 578.2,73.64 578.9,74.39 579.6,76.07 580.3,74.69 581,75.16 581.7,74.82 582.4,75.88 583.1,74.27 583.8,73.6 584.5,75.74 585.2,74.37 585.9,73.89 586.6,72.63 587.3,74.4 588,74.33 588.7,74.43 589.4,74.48 590.1,72.39 590.8,74.33 591.5,73.04 592.2,74.06 592.9,73.38 593.6,73.41 594.3,73.23 595,74.68 595.7,74.12 596.4,73.4 597.1,74.94 597.8,73.16 598.5,74.76 599.2,73.71 599.9,75.33 600.6,75.48 601.3,74.01 602,75.74 602.7,73.84 603.4,74.84 604.1,75.75 604.8,73.95 605.5,75.89 606.2,75.95 606.9,73.98 607.6,76.01 608.3,74.71 609,74.95 609.7,76.47 610.4,73.73 611.1,76.36 611.8,75.01 612.5,76.46 613.2,75.88 613.9,75.59 614.6,74.42 615.3,74.18 616,75.2 616.7,75.79 617.4,75.99 618.1,75.97 618.8,75.82 619.5,73.07 620.2,73.46 620.9,74.85 621.6,74.02 622.3,74.53 623,73.38 623.7,73.98 624.4,73.54 625.1,74.03 625.8,72.9 626.5,75.11 627.2,74.78 627.9,74.18 628.6,72.43 629.3,73.09 630,73.56 630.7,74.64 631.4,72.51 632.1,72.75 632.8,75.35 633.5,72.74 634.2,73.5 634.9,73.67 635.6,74.45 636.3,73.35 637,73.23 637.7,75.09 638.4,73.27 639.1,74.23 639.8,75.54 640.5,75.68 641.2,74.65 641.9,74.91 642.6,74.75 643.3,74.93 644,75.21 644.7,73.86 645.4,74.96 646.1,76.51 646.8,76.41 647.5,74.51 648.2,74.08 648.9,75.68 649.6,76.05 650.3,75.84 651,73.9 651.7,73.55 652.4,75.8 653.1,73.68 653.8,75.97 654.5,73.33 655.2,73.54 655.9,75.11 656.6,75.86 657.3,75.31 658,75.14 658.7,74.9 659.4,74.92 660.1,72.78 660.8,74.22 661.5,73.19 662.2,73.16 662.9,74.63 663.6,73.43 663.6,90.64 662.9,90.6 662.2,91.24 661.5,89.89 660.8,91.8 660.1,90.24 659.4,92.02 658.7,89.49 658,90.65 657.3,89.16 656.6,90.74 655.9,91.45 655.2,91.42 654.5,91.35 653.8,89.32 653.1,89.03 652.4,88.82 651.7,89.07 651,90.37 650.3,90.27 649.6,90.56 648.9,91.2 648.2,90.96 647.5,89.91 646.8,90.9 646.1,89.65 645.4,91.19 644.7,89.84 644,90.68 643.3,89.37 642.6,90.75 641.9,90.82 641.2,89.88 640.5,90.68 639.8,90.01 639.1,90.74 638.4,89.52 637.7,90.18 637,90.76 636.3,90.14 635.6,90.29 634.9,91.2 634.2,90.25 633.5,90.85 632.8,91.94 632.1,89.62 631.4,89.82 630.7,89.46 630,90.89 629.3,91.06 628.6,90.29 627.9,92.06 627.2,89.48 626.5,91.86 625.8,91.79 625.1,91.83 624.4,89.93 623.7,91.65 623,91.84 622.3,90.23 621.6,91.97 620.9,90.67 620.2,89.94 619.5,91.22 618.8,90.65 618.1,91.56 617.4,90.89 616.7,88.9 616,89.57 615.3,88.87 614.6,89.65 613.9,90.15 613.2,91.08 612.5,89.21 611.8,91.38 611.1,91.48 610.4,91.35 609.7,88.99 609,89.76 608.3,89.8 607.6,89.39 606.9,89.48 606.2,89.68 605.5,90.61 604.8,89.57 604.1,91.3 603.4,89.41 602.7,89.25 602,90.3 601.3,90.95 600.6,89.57 599.9,90.43 599.2,90.17 598.5,89.53 597.8,90.58 597.1,90.03 596.4,90.02 595.7,91.6 595,89.5 594.3,90.58 593.6,91.25 592.9,90.41 592.2,90.44 591.5,90.85 590.8,92.36 590.1,89.63 589.4,91.64 588.7,90.46 588,90.77 587.3,89.51 586.6,91.13 585.9,90.98 585.2,89.22 584.5,90.69 583.8,89.98 583.1,91.18 582.4,90.48 581.7,90.76 581,90.64 580.3,90.36 579.6,89.88 578.9,91.58 578.2,91.26 577.5,89.09 576.8,89.81 576.1,88.66 575.4,88.77 574.7,91.52 574,91.46 573.3,89.51 572.6,88.66 571.9,88.67 571.2,90.87 570.5,89.04 569.8,91.02 569.1,91.63 568.4,88.89 567.7,90.47 567,89.43 566.3,90.56 565.6,91.8 564.9,89.45 564.2,91.99 563.5,91.86 562.8,91.84 562.1,90.94 561.4,90.4 560.7,90.19 560,90.64 559.3,90.02 558.6,89.69 557.9,92.24 557.2,91.86 556.5,92.23 555.8,92.11 555.1,90.9 554.4,89.57 553.7,91.24 553,89.64 552.3,91.65 551.6,92 550.9,89.81 550.2,90.74 549.5,90.68 548.8,89.92 548.1,91.68 547.4,89.31 546.7,90.87 546,90.63Z" fill="#000"/>
</svg>
<!-- chart panel -->
<div class="a" style="left:17px;top:118px;width:1081px;height:400px;background:#ffffff"></div>
<svg class="a" style="left:0;top:0" width="1101" height="520" viewBox="0 0 1101 520">
<rect x="82" y="141" width="618" height="26" fill="#ffdcdc"/>
<rect x="82" y="467" width="618" height="25" fill="#ffdcdc"/>
<g fill="#cacaca"><path d="M326.5,387 L326.5,319 L310,319 L310,300 L326.5,300 L326.5,290 C326.5,266 340,256 362,256 L376,256 L376,274.5 L365,274.5 C357,274.5 353,279 353,288 L353,300 L372,300 L372,319 L353,319 L353,387 Z M389,387 L389,257 L413.7,257 L413.7,336 L444,300 L478,300 L440,342 L478,387 L444,387 L413.7,350 L413.7,387 Z"/></g>
<line x1="84" y1="175.5" x2="700" y2="175.5" stroke="#6c6c6c" stroke-width="1" stroke-dasharray="4,2"/>
<line x1="84" y1="210.5" x2="700" y2="210.5" stroke="#6c6c6c" stroke-width="1" stroke-dasharray="4,2"/>
<line x1="84" y1="245.5" x2="700" y2="245.5" stroke="#6c6c6c" stroke-width="1" stroke-dasharray="4,2"/>
<line x1="84" y1="281.5" x2="700" y2="281.5" stroke="#6c6c6c" stroke-width="1" stroke-dasharray="4,2"/>
<line x1="84" y1="351.5" x2="700" y2="351.5" stroke="#6c6c6c" stroke-width="1" stroke-dasharray="4,2"/>
<line x1="84" y1="386.5" x2="700" y2="386.5" stroke="#6c6c6c" stroke-width="1" stroke-dasharray="4,2"/>
<line x1="84" y1="421.5" x2="700" y2="421.5" stroke="#6c6c6c" stroke-width="1" stroke-dasharray="4,2"/>
<line x1="84" y1="456.5" x2="700" y2="456.5" stroke="#6c6c6c" stroke-width="1" stroke-dasharray="4,2"/>
<line x1="82" y1="316.5" x2="700" y2="316.5" stroke="#555" stroke-width="1"/>
<line x1="235.5" y1="140" x2="235.5" y2="492" stroke="#6c6c6c" stroke-width="1" stroke-dasharray="4,2"/>
<line x1="390.5" y1="140" x2="390.5" y2="492" stroke="#6c6c6c" stroke-width="1" stroke-dasharray="4,2"/>
<line x1="545.5" y1="140" x2="545.5" y2="492" stroke="#6c6c6c" stroke-width="1" stroke-dasharray="4,2"/>
<line x1="84" y1="259.5" x2="700" y2="259.5" stroke="#6c6cc8" stroke-width="1" stroke-dasharray="4,2"/>
<line x1="84" y1="377.5" x2="700" y2="377.5" stroke="#6c6cc8" stroke-width="1" stroke-dasharray="4,2"/>
<line x1="700" y1="259.5" x2="713" y2="259.5" stroke="#6a6ad0" stroke-width="1"/>
<line x1="700" y1="377.5" x2="713" y2="377.5" stroke="#6a6ad0" stroke-width="1"/>
<line x1="706.5" y1="259" x2="706.5" y2="378" stroke="#6a6ad0" stroke-width="1"/>
<line x1="81.5" y1="140.5" x2="700.5" y2="140.5" stroke="#6e6e6e" stroke-width="1"/>
<line x1="81.5" y1="492.5" x2="700.5" y2="492.5" stroke="#6e6e6e" stroke-width="1"/>
<line x1="81.5" y1="140" x2="81.5" y2="499" stroke="#6e6e6e" stroke-width="1"/>
<line x1="700.5" y1="140" x2="700.5" y2="499" stroke="#6e6e6e" stroke-width="1"/>
<line x1="235.5" y1="492" x2="235.5" y2="499" stroke="#6e6e6e" stroke-width="1"/>
<line x1="390.5" y1="492" x2="390.5" y2="499" stroke="#6e6e6e" stroke-width="1"/>
<line x1="545.5" y1="492" x2="545.5" y2="499" stroke="#6e6e6e" stroke-width="1"/>
<line x1="75" y1="140.5" x2="82" y2="140.5" stroke="#6e6e6e" stroke-width="1"/>
<line x1="75" y1="175.5" x2="82" y2="175.5" stroke="#6e6e6e" stroke-width="1"/>
<line x1="75" y1="210.5" x2="82" y2="210.5" stroke="#6e6e6e" stroke-width="1"/>
<line x1="75" y1="245.5" x2="82" y2="245.5" stroke="#6e6e6e" stroke-width="1"/>
<line x1="75" y1="281.5" x2="82" y2="281.5" stroke="#6e6e6e" stroke-width="1"/>
<line x1="75" y1="316.5" x2="82" y2="316.5" stroke="#6e6e6e" stroke-width="1"/>
<line x1="75" y1="351.5" x2="82" y2="351.5" stroke="#6e6e6e" stroke-width="1"/>
<line x1="75" y1="386.5" x2="82" y2="386.5" stroke="#6e6e6e" stroke-width="1"/>
<line x1="75" y1="421.5" x2="82" y2="421.5" stroke="#6e6e6e" stroke-width="1"/>
<line x1="75" y1="456.5" x2="82" y2="456.5" stroke="#6e6e6e" stroke-width="1"/>
<line x1="75" y1="492.5" x2="82" y2="492.5" stroke="#6e6e6e" stroke-width="1"/>
<g stroke="#5a5ae0" stroke-opacity="0.85" stroke-width="2.5"><line x1="202" y1="258" x2="215" y2="258"/><line x1="208.5" y1="252" x2="208.5" y2="264"/><line x1="206" y1="377" x2="219" y2="377"/><line x1="212.5" y1="371" x2="212.5" y2="383"/></g>
<path d="M81.5,291 82.03,301.1 82.55,325.5 83.07,349.9 83.6,360 84.12,357.74 84.64,351.19 85.16,340.98 85.68,328.11 86.2,313.85 86.72,299.59 87.24,286.72 87.76,276.51 88.28,269.96 88.8,267.7 89.35,271.32 89.9,281.61 90.45,297.02 91,315.2 91.55,333.38 92.1,348.79 92.65,359.08 93.2,362.7 93.73,359.76 94.27,351.29 94.8,338.32 95.33,322.42 95.87,305.48 96.4,289.57 96.93,276.61 97.47,268.14 98,265.2 98.53,269.03 99.05,279.95 99.58,296.28 100.1,315.55 100.62,334.82 101.15,351.15 101.67,362.07 102.2,365.9 102.73,362.86 103.27,354.12 103.8,340.72 104.33,324.29 104.87,306.81 105.4,290.38 105.93,276.98 106.47,268.24 107,265.2 107.53,268.36 108.07,277.46 108.6,291.4 109.13,308.5 109.67,326.7 110.2,343.8 110.73,357.74 111.27,366.84 111.8,370 112.34,365.76 112.88,353.69 113.41,335.62 113.95,314.3 114.49,292.98 115.02,274.91 115.56,262.84 116.1,258.6 116.63,261.89 117.17,271.36 117.7,285.88 118.23,303.68 118.77,322.62 119.3,340.42 119.83,354.94 120.37,364.41 120.9,367.7 121.44,363.76 121.98,352.56 122.51,335.78 123.05,316 123.59,296.22 124.12,279.44 124.66,268.24 125.2,264.3 125.74,268.11 126.28,278.97 126.81,295.23 127.35,314.4 127.89,333.57 128.43,349.83 128.96,360.69 129.5,364.5 130.02,361.53 130.54,352.97 131.07,339.85 131.59,323.76 132.11,306.64 132.63,290.55 133.16,277.43 133.68,268.87 134.2,265.9 134.73,268.94 135.27,277.7 135.8,291.12 136.33,307.59 136.87,325.11 137.4,341.57 137.93,355 138.47,363.76 139,366.8 139.51,363.92 140.02,355.63 140.53,342.93 141.04,327.34 141.56,310.76 142.07,295.18 142.58,282.47 143.09,274.18 143.6,271.3 144.1,274.08 144.6,282.1 145.1,294.38 145.6,309.44 146.1,325.46 146.6,340.52 147.1,352.8 147.6,360.82 148.1,363.6 148.61,360.9 149.12,353.11 149.63,341.18 150.14,326.54 150.66,310.96 151.17,296.32 151.68,284.39 152.19,276.6 152.7,273.9 153.2,276.53 153.7,284.1 154.2,295.7 154.7,309.93 155.2,325.07 155.7,339.3 156.2,350.9 156.7,358.47 157.2,361.1 157.73,358.42 158.27,350.69 158.8,338.85 159.33,324.33 159.87,308.87 160.4,294.35 160.93,282.51 161.47,274.78 162,272.1 162.54,275.54 163.07,285.34 163.61,300 164.15,317.3 164.69,334.6 165.23,349.26 165.76,359.06 166.3,362.5 166.82,360.35 167.34,354.1 167.86,344.36 168.38,332.1 168.9,318.5 169.42,304.9 169.94,292.64 170.46,282.9 170.98,276.65 171.5,274.5 172.05,277.88 172.6,287.49 173.15,301.88 173.7,318.85 174.25,335.82 174.8,350.21 175.35,359.82 175.9,363.2 176.4,360.3 176.9,351.95 177.4,339.15 177.9,323.45 178.4,306.75 178.9,291.05 179.4,278.25 179.9,269.9 180.4,267 180.91,270.15 181.42,279.2 181.93,293.07 182.44,310.09 182.96,328.21 183.47,345.23 183.98,359.1 184.49,368.15 185,371.3 185.54,368.05 186.09,358.7 186.63,344.38 187.18,326.8 187.72,308.1 188.27,290.53 188.81,276.2 189.36,266.85 189.9,263.6 190.41,267.73 190.93,279.5 191.44,297.12 191.95,317.9 192.46,338.68 192.97,356.3 193.49,368.07 194,372.2 194.54,368.81 195.09,359.05 195.63,344.1 196.18,325.76 196.72,306.24 197.27,287.9 197.81,272.95 198.36,263.19 198.9,259.8 199.43,264.25 199.95,276.93 200.47,295.91 201,318.3 201.53,340.69 202.05,359.67 202.57,372.35 203.1,376.8 203.62,373.87 204.14,365.35 204.66,352.09 205.18,335.38 205.7,316.85 206.22,298.32 206.74,281.61 207.26,268.35 207.78,259.83 208.3,256.9 208.86,262.86 209.41,279.55 209.97,303.67 210.53,330.43 211.09,354.55 211.64,371.24 212.2,377.2 212.71,374.39 213.22,366.25 213.73,353.56 214.24,337.57 214.75,319.85 215.26,302.13 215.77,286.14 216.28,273.45 216.79,265.31 217.3,262.5 217.8,266.66 218.3,278.51 218.8,296.24 219.3,317.15 219.8,338.06 220.3,355.79 220.8,367.64 221.3,371.8 221.81,369.24 222.32,361.79 222.83,350.2 223.34,335.59 223.85,319.4 224.36,303.21 224.87,288.6 225.38,277.01 225.89,269.56 226.4,267 226.95,270.83 227.5,281.75 228.05,298.08 228.6,317.35 229.15,336.62 229.7,352.95 230.25,363.87 230.8,367.7 231.32,364.97 231.84,357.09 232.37,345.02 232.89,330.22 233.41,314.48 233.93,299.68 234.46,287.61 234.98,279.73 235.5,277 236.05,280.06 236.6,288.79 237.15,301.85 237.7,317.25 238.25,332.65 238.8,345.71 239.35,354.44 239.9,357.5 240.41,355.65 240.92,350.26 241.43,341.88 241.94,331.31 242.45,319.6 242.96,307.89 243.47,297.32 243.98,288.94 244.49,283.55 245,281.7 245.5,284.63 246,292.96 246.5,305.44 247,320.15 247.5,334.86 248,347.34 248.5,355.67 249,358.6 249.51,357 250.02,352.31 250.53,344.93 251.04,335.45 251.55,324.64 252.05,313.36 252.56,302.55 253.07,293.07 253.58,285.69 254.09,281 254.6,279.4 255.11,283.24 255.63,294.01 256.14,309.57 256.66,326.83 257.17,342.39 257.69,353.16 258.2,357 258.71,355.46 259.22,350.97 259.73,343.88 260.24,334.79 260.75,324.41 261.25,313.59 261.76,303.21 262.27,294.12 262.78,287.03 263.29,282.54 263.8,281 264.36,284.76 264.91,295.31 265.47,310.54 266.03,327.46 266.59,342.69 267.14,353.24 267.7,357 268.21,355.01 268.72,349.23 269.23,340.22 269.74,328.88 270.25,316.3 270.76,303.72 271.27,292.38 271.78,283.37 272.29,277.59 272.8,275.6 273.34,278.94 273.88,288.46 274.41,302.7 274.95,319.5 275.49,336.3 276.03,350.54 276.56,360.06 277.1,363.4 277.62,361.12 278.14,354.52 278.66,344.23 279.18,331.27 279.7,316.9 280.22,302.53 280.74,289.57 281.26,279.28 281.78,272.68 282.3,270.4 282.81,274.06 283.32,284.49 283.84,300.09 284.35,318.5 284.86,336.91 285.38,352.51 285.89,362.94 286.4,366.6 286.94,363.77 287.49,355.62 288.03,343.12 288.58,327.8 289.12,311.5 289.67,296.18 290.21,283.68 290.76,275.53 291.3,272.7 291.81,276.3 292.32,286.55 292.84,301.9 293.35,320 293.86,338.1 294.38,353.45 294.89,363.7 295.4,367.3 295.94,364.48 296.49,356.36 297.03,343.93 297.58,328.67 298.12,312.43 298.67,297.18 299.21,284.74 299.76,276.62 300.3,273.8 300.8,276.55 301.3,284.47 301.8,296.6 302.3,311.48 302.8,327.32 303.3,342.2 303.8,354.33 304.3,362.25 304.8,365 305.3,362.25 305.8,354.33 306.3,342.2 306.8,327.32 307.3,311.48 307.8,296.6 308.3,284.47 308.8,276.55 309.3,273.8 309.8,276.3 310.3,283.5 310.8,294.52 311.3,308.05 311.8,322.45 312.3,335.97 312.8,347 313.3,354.2 313.8,356.7 314.3,354.81 314.8,349.32 315.3,340.77 315.8,329.99 316.3,318.05 316.8,306.11 317.3,295.33 317.8,286.78 318.3,281.29 318.8,279.4 319.3,281.54 319.8,287.71 320.3,297.15 320.8,308.74 321.3,321.06 321.8,332.65 322.3,342.09 322.8,348.26 323.3,350.4 323.8,348.43 324.3,342.75 324.8,334.05 325.3,323.38 325.8,312.02 326.3,301.35 326.8,292.65 327.3,286.97 327.8,285 328.32,287.01 328.84,292.78 329.37,301.62 329.89,312.48 330.41,324.02 330.93,334.88 331.46,343.72 331.98,349.49 332.5,351.5 333,349.86 333.5,345.11 334,337.71 334.5,328.39 335,318.05 335.5,307.71 336,298.39 336.5,290.99 337,286.24 337.5,284.6 338,286.65 338.5,292.55 339,301.6 339.5,312.7 340,324.5 340.5,335.6 341,344.65 341.5,350.55 342,352.6 342.52,350.85 343.04,345.76 343.56,337.84 344.08,327.86 344.6,316.8 345.12,305.74 345.64,295.76 346.16,287.84 346.68,282.75 347.2,281 347.74,284.86 348.29,295.67 348.83,311.28 349.37,328.62 349.91,344.23 350.46,355.04 351,358.9 351.51,357.13 352.02,351.96 352.53,343.82 353.04,333.35 353.55,321.42 354.05,308.98 354.56,297.05 355.07,286.58 355.58,278.44 356.09,273.27 356.6,271.5 357.16,275.91 357.71,288.25 358.27,306.1 358.83,325.9 359.39,343.75 359.94,356.09 360.5,360.5 361.01,358.3 361.52,351.9 362.03,341.93 362.54,329.37 363.05,315.45 363.56,301.53 364.07,288.97 364.58,279 365.09,272.6 365.6,270.4 366.11,274.04 366.62,284.4 367.14,299.91 367.65,318.2 368.16,336.49 368.68,352 369.19,362.36 369.7,366 370.24,363.04 370.79,354.5 371.33,341.43 371.88,325.38 372.42,308.32 372.97,292.27 373.51,279.2 374.06,270.66 374.6,267.7 375.1,270.59 375.6,278.89 376.1,291.62 376.6,307.24 377.1,323.86 377.6,339.47 378.1,352.21 378.6,360.51 379.1,363.4 379.6,361.15 380.1,354.62 380.6,344.46 381.1,331.65 381.6,317.45 382.1,303.25 382.6,290.44 383.1,280.28 383.6,273.75 384.1,271.5 384.6,274.32 385.1,282.44 385.6,294.88 386.1,310.13 386.6,326.37 387.1,341.62 387.6,354.06 388.1,362.18 388.6,365 389.12,362.74 389.64,356.19 390.16,345.98 390.68,333.11 391.2,318.85 391.72,304.59 392.24,291.72 392.76,281.51 393.28,274.96 393.8,272.7 394.33,277.22 394.86,289.87 395.39,308.15 395.91,328.45 396.44,346.73 396.97,359.38 397.5,363.9 398.04,361.7 398.58,355.3 399.12,345.33 399.66,332.77 400.2,318.85 400.74,304.93 401.28,292.37 401.82,282.4 402.36,276 402.9,273.8 403.47,279.76 404.03,296.02 404.6,318.25 405.17,340.47 405.73,356.74 406.3,362.7 406.81,360.94 407.32,355.82 407.83,347.74 408.34,337.36 408.85,325.52 409.35,313.18 409.86,301.34 410.37,290.96 410.88,282.88 411.39,277.76 411.9,276 412.44,280.33 412.99,292.45 413.53,309.98 414.07,329.42 414.61,346.95 415.16,359.07 415.7,363.4 416.22,361.2 416.74,354.8 417.26,344.83 417.78,332.27 418.3,318.35 418.82,304.43 419.34,291.87 419.86,281.9 420.38,275.5 420.9,273.3 421.44,277.73 421.99,290.13 422.53,308.05 423.07,327.95 423.61,345.87 424.16,358.27 424.7,362.7 425.22,360.52 425.74,354.21 426.26,344.38 426.78,331.99 427.3,318.25 427.82,304.51 428.34,292.12 428.86,282.29 429.38,275.98 429.9,273.8 430.4,276.48 430.9,284.2 431.4,296.02 431.9,310.53 432.4,325.97 432.9,340.47 433.4,352.3 433.9,360.02 434.4,362.7 434.9,360.58 435.4,354.42 435.9,344.83 436.4,332.75 436.9,319.35 437.4,305.95 437.9,293.87 438.4,284.28 438.9,278.12 439.4,276 439.9,279.3 440.4,288.7 440.9,302.76 441.4,319.35 441.9,335.94 442.4,350 442.9,359.4 443.4,362.7 443.92,360.55 444.44,354.32 444.96,344.6 445.48,332.37 446,318.8 446.52,305.23 447.04,293 447.56,283.28 448.08,277.05 448.6,274.9 449.14,279.08 449.69,290.81 450.23,307.75 450.77,326.55 451.31,343.49 451.86,355.22 452.4,359.4 452.92,357.63 453.44,352.46 453.95,344.32 454.47,333.85 454.99,321.92 455.51,309.48 456.03,297.55 456.55,287.08 457.06,278.94 457.58,273.77 458.1,272 458.64,276.49 459.19,289.07 459.73,307.26 460.27,327.44 460.81,345.63 461.36,358.21 461.9,362.7 462.42,360.47 462.94,353.99 463.46,343.9 463.98,331.19 464.5,317.1 465.02,303.01 465.54,290.3 466.06,280.21 466.58,273.73 467.1,271.5 467.6,275.02 468.1,285.03 468.6,300.02 469.1,317.7 469.6,335.38 470.1,350.37 470.6,360.38 471.1,363.9 471.6,361.78 472.1,355.62 472.6,346.03 473.1,333.95 473.6,320.55 474.1,307.15 474.6,295.07 475.1,285.48 475.6,279.32 476.1,277.2 476.6,279.58 477.1,286.42 477.6,296.9 478.1,309.76 478.6,323.44 479.1,336.3 479.6,346.78 480.1,353.62 480.6,356 481.1,353.69 481.6,347.04 482.1,336.85 482.6,324.35 483.1,311.05 483.6,298.55 484.1,288.36 484.6,281.71 485.1,279.4 485.6,281.64 486.1,288.09 486.6,297.97 487.1,310.1 487.6,323 488.1,335.12 488.6,345.01 489.1,351.46 489.6,353.7 490.14,351.53 490.69,345.28 491.23,335.7 491.78,323.95 492.32,311.45 492.87,299.7 493.41,290.12 493.96,283.87 494.5,281.7 495,283.8 495.5,289.87 496,299.15 496.5,310.54 497,322.66 497.5,334.05 498,343.33 498.5,349.4 499,351.5 499.53,349.48 500.07,343.67 500.6,334.78 501.13,323.86 501.67,312.24 502.2,301.33 502.73,292.43 503.27,286.62 503.8,284.6 504.32,287.19 504.85,294.56 505.38,305.59 505.9,318.6 506.43,331.61 506.95,342.64 507.48,350.01 508,352.6 508.52,350.86 509.04,345.83 509.56,337.99 510.08,328.1 510.6,317.15 511.12,306.2 511.64,296.31 512.16,288.47 512.68,283.44 513.2,281.7 513.7,283.87 514.2,290.12 514.7,299.7 515.2,311.45 515.7,323.95 516.2,335.7 516.7,345.28 517.2,351.53 517.7,353.7 518.22,351.88 518.74,346.6 519.26,338.39 519.78,328.03 520.3,316.55 520.82,305.07 521.34,294.71 521.86,286.5 522.38,281.22 522.9,279.4 523.46,283.02 524.01,293.18 524.57,307.86 525.13,324.14 525.69,338.82 526.24,348.98 526.8,352.6 527.31,351.07 527.82,346.62 528.33,339.59 528.84,330.56 529.35,320.27 529.85,309.53 530.36,299.24 530.87,290.21 531.38,283.18 531.89,278.73 532.4,277.2 532.9,280.16 533.4,288.58 533.9,301.18 534.4,316.05 534.9,330.92 535.4,343.52 535.9,351.94 536.4,354.9 536.9,352.93 537.4,347.19 537.9,338.27 538.4,327.02 538.9,314.55 539.4,302.08 539.9,290.83 540.4,281.91 540.9,276.17 541.4,274.2 541.9,276.7 542.4,283.9 542.9,294.93 543.4,308.45 543.9,322.85 544.4,336.38 544.9,347.4 545.4,354.6 545.9,357.1 546.4,354.62 546.9,347.48 547.4,336.55 547.9,323.14 548.4,308.86 548.9,295.45 549.4,284.52 549.9,277.38 550.4,274.9 550.91,277.41 551.42,284.64 551.93,295.72 552.44,309.32 552.96,323.78 553.47,337.38 553.98,348.46 554.49,355.69 555,358.2 555.52,355.63 556.04,348.23 556.57,336.9 557.09,323 557.61,308.2 558.13,294.3 558.66,282.97 559.18,275.57 559.7,273 560.24,276.41 560.78,286.14 561.31,300.69 561.85,317.85 562.39,335.01 562.92,349.56 563.46,359.29 564,362.7 564.5,360.5 565,354.11 565.5,344.15 566,331.61 566.5,317.7 567,303.79 567.5,291.25 568,281.29 568.5,274.9 569,272.7 569.5,275.31 570,282.84 570.5,294.38 571,308.52 571.5,323.58 572,337.72 572.5,349.26 573,356.79 573.5,359.4 574.02,356.82 574.54,349.39 575.07,338 575.59,324.03 576.11,309.17 576.63,295.2 577.16,283.81 577.68,276.38 578.2,273.8 578.7,276.53 579.2,284.41 579.7,296.48 580.2,311.28 580.7,327.02 581.2,341.82 581.7,353.89 582.2,361.77 582.7,364.5 583.2,361.75 583.7,353.83 584.2,341.7 584.7,326.82 585.2,310.98 585.7,296.1 586.2,283.97 586.7,276.05 587.2,273.3 587.7,275.88 588.2,283.31 588.7,294.7 589.2,308.67 589.7,323.53 590.2,337.5 590.7,348.89 591.2,356.32 591.7,358.9 592.2,356.92 592.7,351.16 593.2,342.18 593.7,330.88 594.2,318.35 594.7,305.82 595.2,294.52 595.7,285.54 596.2,279.78 596.7,277.8 597.2,280.16 597.7,286.95 598.2,297.35 598.7,310.11 599.2,323.69 599.7,336.45 600.2,346.85 600.7,353.64 601.2,356 601.72,354.14 602.24,348.75 602.76,340.36 603.28,329.78 603.8,318.05 604.32,306.32 604.84,295.74 605.36,287.35 605.88,281.96 606.4,280.1 606.94,284.08 607.49,295.24 608.03,311.35 608.57,329.25 609.11,345.36 609.66,356.52 610.2,360.5 610.72,358.55 611.24,352.91 611.76,344.11 612.28,333.03 612.8,320.75 613.32,308.47 613.84,297.39 614.36,288.59 614.88,282.95 615.4,281 615.92,283.7 616.45,291.38 616.98,302.88 617.5,316.45 618.02,330.02 618.55,341.52 619.08,349.2 619.6,351.9 620.12,350.15 620.64,345.08 621.16,337.18 621.68,327.23 622.2,316.2 622.72,305.17 623.24,295.22 623.76,287.32 624.28,282.25 624.8,280.5 625.31,283.29 625.82,291.22 626.34,303.09 626.85,317.1 627.36,331.11 627.88,342.98 628.39,350.91 628.9,353.7 629.44,351.32 629.99,344.48 630.53,334 631.08,321.14 631.62,307.46 632.17,294.6 632.71,284.12 633.26,277.28 633.8,274.9 634.3,277.48 634.8,284.91 635.3,296.3 635.8,310.27 636.3,325.13 636.8,339.1 637.3,350.49 637.8,357.92 638.3,360.5 638.8,358.37 639.3,352.17 639.8,342.53 640.3,330.37 640.8,316.9 641.3,303.43 641.8,291.27 642.3,281.63 642.8,275.43 643.3,273.3 643.8,276.53 644.3,285.73 644.8,299.51 645.3,315.75 645.8,331.99 646.3,345.77 646.8,354.97 647.3,358.2 647.82,356.09 648.34,349.97 648.86,340.43 649.38,328.42 649.9,315.1 650.42,301.78 650.94,289.77 651.46,280.23 651.98,274.11 652.5,272 653.04,275.48 653.58,285.39 654.11,300.21 654.65,317.7 655.19,335.19 655.72,350.01 656.26,359.92 656.8,363.4 657.32,360.6 657.84,352.52 658.37,340.15 658.89,324.97 659.41,308.83 659.93,293.65 660.46,281.28 660.98,273.2 661.5,270.4 662,273.18 662.5,281.2 663,293.47 663.5,308.54 664,324.56 664.5,339.62 665,351.9 665.5,359.92 666,362.7 666.5,360.09 667,352.56 667.5,341.02 668,326.88 668.5,311.82 669,297.68 669.5,286.14 670,278.61 670.5,276 671,278.07 671.5,284.07 672,293.42 672.5,305.19 673,318.25 673.5,331.31 674,343.08 674.5,352.43 675,358.43 675.5,360.5 676,358.02 676.5,350.88 677,339.95 677.5,326.54 678,312.26 678.5,298.85 679,287.92 679.5,280.78 680,278.3 680.5,280.75 681,287.79 681.5,298.57 682,311.81 682.5,325.89 683,339.12 683.5,349.91 684,356.95 684.5,359.4 685,357.37 685.5,351.48 686,342.31 686.5,330.76 687,317.95 687.5,305.14 688,293.59 688.5,284.42 689,278.53 689.5,276.5 690,278.93 690.5,285.93 691,296.65 691.5,309.8 692,323.8 692.5,336.95 693,347.67 693.5,354.67 694,357.1 694.51,355.09 695.02,349.25 695.53,340.16 696.04,328.7 696.55,316 697.06,303.3 697.57,291.84 698.08,282.75 698.59,276.91 699.1,274.9 699.8,282.95 700.5,291" fill="none" stroke="#000" stroke-width="2.15" stroke-linejoin="round"/>
<circle cx="931.5" cy="316.5" r="127" fill="none" stroke="#7c7cdc" stroke-width="1" stroke-dasharray="3,2.5"/>
<circle cx="931.5" cy="316.5" r="68.5" fill="none" stroke="#7c7cdc" stroke-width="1" stroke-dasharray="3,2.5"/>
<circle cx="931.5" cy="316.5" r="98.5" fill="none" stroke="#c8c8c8" stroke-width="1"/>
<g fill="#c8c8c8" transform="translate(908,297.3) scale(0.29,0.3) translate(-310,-256)"><path d="M326.5,387 L326.5,319 L310,319 L310,300 L326.5,300 L326.5,290 C326.5,266 340,256 362,256 L376,256 L376,274.5 L365,274.5 C357,274.5 353,279 353,288 L353,300 L372,300 L372,319 L353,319 L353,387 Z M389,387 L389,257 L413.7,257 L413.7,336 L444,300 L478,300 L440,342 L478,387 L444,387 L413.7,350 L413.7,387 Z"/></g>
<line x1="931.5" y1="165" x2="931.5" y2="190" stroke="#555" stroke-width="1"/>
<line x1="931.5" y1="190" x2="931.5" y2="443" stroke="#5a5a5a" stroke-width="1" stroke-dasharray="4,2"/>
<line x1="931.5" y1="443" x2="931.5" y2="452" stroke="#555" stroke-width="1"/>
<line x1="797" y1="316.5" x2="805" y2="316.5" stroke="#555" stroke-width="1"/>
<line x1="805" y1="316.5" x2="1058" y2="316.5" stroke="#5a5a5a" stroke-width="1" stroke-dasharray="4,2"/>
<line x1="1058" y1="316.5" x2="1066" y2="316.5" stroke="#555" stroke-width="1"/>
<path d="M931.5,205.18 932.07,210.16 932.51,222.19 932.82,234.22 933.15,239.21 933.59,238.11 934.1,234.89 934.72,229.88 935.45,223.56 936.27,216.56 937.17,209.56 938.11,203.26 939.02,198.28 939.87,195.09 940.59,194.03 941.13,195.86 941.37,200.97 941.33,208.59 941.07,217.57 940.71,226.54 940.4,234.15 940.28,239.24 940.5,241.06 941.09,239.67 942.04,235.59 943.34,229.31 944.91,221.61 946.64,213.42 948.38,205.75 949.98,199.53 951.28,195.51 952.18,194.19 952.5,196.17 952.19,201.58 951.33,209.61 950.12,219.04 948.81,228.47 947.68,236.45 947.01,241.81 947.02,243.74 947.73,242.36 949.08,238.25 950.98,231.91 953.3,224.13 955.83,215.87 958.32,208.14 960.52,201.88 962.22,197.87 963.25,196.59 963.49,198.27 962.94,202.77 961.68,209.55 959.93,217.82 957.93,226.58 956,234.8 954.43,241.51 953.5,245.92 953.41,247.52 954.43,245.65 956.68,240.13 959.93,231.82 963.79,222.03 967.76,212.28 971.3,204.09 973.93,198.7 975.29,196.98 975.37,198.73 974.36,203.34 972.4,210.25 969.78,218.65 966.86,227.54 964.05,235.87 961.77,242.66 960.38,247.14 960.12,248.79 961.26,247.17 963.84,242.26 967.59,234.88 972.03,226.18 976.56,217.52 980.57,210.26 983.49,205.53 984.93,204.06 984.72,206.05 982.97,211.15 979.99,218.61 976.28,227.33 972.48,236 969.24,243.34 967.16,248.29 966.65,250.15 967.7,249.05 970.07,245.53 973.56,240.07 977.83,233.37 982.42,226.26 986.83,219.65 990.58,214.34 993.25,211.02 994.56,210.08 994.36,211.71 992.69,215.75 989.77,221.72 985.99,228.92 981.86,236.53 977.93,243.65 974.74,249.46 972.74,253.31 972.25,254.79 973.36,253.82 975.97,250.65 979.85,245.71 984.58,239.64 989.66,233.22 994.52,227.24 998.62,222.47 1001.5,219.51 1002.84,218.73 1002.52,220.19 1000.65,223.72 997.48,228.91 993.42,235.15 989.02,241.73 984.84,247.89 981.45,252.92 979.31,256.27 978.76,257.58 979.9,256.79 982.65,254.07 986.72,249.81 991.7,244.56 997.03,239.01 1002.12,233.87 1006.39,229.78 1009.36,227.28 1010.71,226.68 1010.3,228.06 1008.25,231.23 1004.84,235.85 1000.5,241.39 995.8,247.21 991.35,252.66 987.74,257.12 985.46,260.1 984.85,261.31 986.07,260.65 989.05,258.23 993.49,254.42 998.91,249.71 1004.71,244.75 1010.24,240.16 1014.86,236.55 1018.06,234.38 1019.47,233.94 1018.67,235.58 1015.56,239.32 1010.62,244.64 1004.67,250.77 998.65,256.84 993.55,261.98 990.2,265.48 989.19,266.91 990.26,266.53 992.88,264.86 996.84,262.11 1001.79,258.61 1007.29,254.75 1012.84,250.94 1017.91,247.61 1022.04,245.09 1024.85,243.67 1026.07,243.52 1025.15,245.06 1021.77,248.44 1016.46,253.18 1010.07,258.62 1003.63,263.98 998.17,268.53 994.57,271.65 993.46,272.96 994.85,272.46 998.47,270.45 1003.92,267.24 1010.59,263.29 1017.71,259.12 1024.47,255.31 1030.06,252.34 1033.85,250.61 1035.39,250.36 1034.42,251.73 1030.96,254.62 1025.46,258.72 1018.58,263.57 1011.2,268.62 1004.24,273.32 998.56,277.16 994.9,279.74 993.74,280.84 995.33,280.4 999.56,278.51 1005.95,275.47 1013.79,271.75 1022.16,267.84 1030.08,264.29 1036.63,261.56 1041.03,260.03 1042.77,259.91 1041.24,261.41 1036.33,264.55 1028.79,268.92 1019.81,273.88 1010.78,278.74 1003.12,282.85 998.03,285.66 996.33,286.85 998.02,286.53 1002.58,284.94 1009.51,282.38 1018,279.24 1027.06,275.96 1035.63,273 1042.69,270.77 1047.4,269.58 1049.21,269.61 1047.41,271.04 1041.82,273.91 1033.3,277.82 1023.17,282.23 1012.99,286.53 1004.35,290.14 998.6,292.63 996.65,293.71 998.14,293.58 1002.24,292.59 1008.57,290.9 1016.53,288.76 1025.38,286.42 1034.25,284.17 1042.29,282.29 1048.72,280.97 1052.93,280.4 1054.51,280.63 1051.89,282.14 1044.16,285.03 1032.86,288.8 1020.27,292.78 1008.9,296.29 1001.04,298.76 998.28,299.86 999.71,299.88 1003.71,299.31 1009.89,298.26 1017.67,296.92 1026.3,295.48 1034.94,294.12 1042.77,293.03 1049.02,292.35 1053.08,292.17 1054.56,292.53 1052.67,293.54 1047.04,295.21 1038.54,297.34 1028.48,299.65 1018.39,301.85 1009.84,303.7 1004.14,305.01 1002.17,305.69 1003.47,305.87 1007.16,305.73 1012.88,305.35 1020.07,304.83 1028.05,304.28 1036.04,303.82 1043.26,303.53 1049,303.48 1052.72,303.71 1054.04,304.21 1052.22,305.07 1046.93,306.22 1038.96,307.54 1029.54,308.87 1020.1,310.1 1012.1,311.13 1006.76,311.91 1004.9,312.44 1006.26,312.76 1010.16,312.98 1016.12,313.16 1023.43,313.36 1031.21,313.63 1038.52,313.98 1044.47,314.44 1048.37,314.99 1049.72,315.6 1048.21,316.26 1043.91,316.9 1037.47,317.47 1029.87,317.95 1022.27,318.34 1015.82,318.68 1011.51,319.02 1009.98,319.41 1010.88,319.85 1013.51,320.39 1017.62,321.03 1022.8,321.78 1028.53,322.61 1034.26,323.51 1039.41,324.42 1043.49,325.31 1046.09,326.11 1046.95,326.78 1045.46,327.23 1041.32,327.4 1035.14,327.32 1027.87,327.06 1020.61,326.72 1014.45,326.44 1010.33,326.35 1008.84,326.57 1009.57,327.07 1011.8,327.8 1015.35,328.74 1019.9,329.87 1025.1,331.15 1030.51,332.52 1035.68,333.91 1040.2,335.24 1043.68,336.44 1045.85,337.44 1046.52,338.17 1044.54,338.41 1039.22,337.97 1031.59,336.99 1023.15,335.76 1015.55,334.62 1010.28,333.92 1008.34,333.91 1008.99,334.48 1011.05,335.39 1014.34,336.62 1018.59,338.13 1023.44,339.84 1028.47,341.66 1033.29,343.47 1037.48,345.16 1040.7,346.64 1042.67,347.8 1043.24,348.59 1041.27,348.7 1036.11,347.83 1028.75,346.22 1020.62,344.29 1013.3,342.52 1008.21,341.37 1006.3,341.23 1007.11,341.93 1009.67,343.24 1013.72,345.1 1018.85,347.39 1024.52,349.94 1030.17,352.55 1035.23,355.01 1039.18,357.11 1041.63,358.69 1042.32,359.61 1040.56,359.61 1035.96,358.46 1029.23,356.37 1021.36,353.74 1013.52,351.01 1006.88,348.7 1002.4,347.25 1000.72,346.97 1001.58,347.79 1004.38,349.5 1008.82,352 1014.42,355.11 1020.62,358.57 1026.79,362.1 1032.3,365.39 1036.59,368.16 1039.23,370.16 1039.95,371.24 1038.05,370.98 1033.2,369.17 1026.12,366.12 1017.84,362.36 1009.61,358.51 1002.63,355.24 997.93,353.12 996.16,352.59 997.18,353.63 1000.46,355.99 1005.57,359.46 1011.84,363.7 1018.49,368.25 1024.67,372.63 1029.62,376.35 1032.7,379 1033.54,380.3 1031.71,379.88 1027.12,377.68 1020.45,374.06 1012.68,369.64 1004.96,365.13 998.42,361.31 994,358.82 992.32,358.14 993.23,359.27 996.27,361.91 1001.02,365.81 1006.85,370.58 1013.03,375.7 1018.76,380.6 1023.33,384.74 1026.15,387.65 1026.86,389.02 1025.42,388.67 1021.97,386.75 1016.9,383.52 1010.81,379.39 1004.4,374.91 998.4,370.67 993.5,367.22 990.23,365.05 988.94,364.47 989.73,365.64 992.45,368.47 996.72,372.68 1001.97,377.82 1007.52,383.34 1012.67,388.59 1016.75,393 1019.25,396.05 1019.85,397.41 1018.53,397.02 1015.53,395.04 1011.18,391.73 1005.97,387.53 1000.5,382.99 995.38,378.68 991.19,375.2 988.37,373 987.21,372.41 987.58,373.36 989.19,375.58 991.82,378.9 995.17,383.05 998.88,387.64 1002.55,392.28 1005.77,396.53 1008.22,400.01 1009.61,402.4 1009.8,403.49 1008.66,403.1 1006.21,401.21 1002.71,398.08 998.56,394.12 994.22,389.84 990.16,385.8 986.81,382.53 984.54,380.47 983.54,379.92 983.83,380.94 985.26,383.38 987.59,387.01 990.48,391.43 993.54,396.14 996.35,400.62 998.52,404.36 999.76,406.94 999.89,408.06 998.81,407.63 996.65,405.68 993.62,402.49 990.06,398.47 986.34,394.13 982.86,390.03 979.99,386.71 978.01,384.62 977.1,384.05 977.2,384.95 978.15,387.13 979.78,390.42 981.9,394.53 984.25,399.08 986.55,403.65 988.54,407.83 989.99,411.22 990.73,413.52 990.66,414.51 989.64,413.94 987.67,411.73 984.94,408.16 981.74,403.69 978.42,398.88 975.31,394.35 972.75,390.68 970.97,388.33 970.12,387.64 970.16,388.61 970.95,391.03 972.36,394.7 974.21,399.28 976.24,404.37 978.23,409.48 979.92,414.13 981.12,417.89 981.68,420.41 981.5,421.45 980.11,420 977.3,415.43 973.56,408.68 969.55,401.12 965.96,394.29 963.4,389.59 962.25,388.02 962.22,388.98 962.82,391.49 963.96,395.36 965.5,400.31 967.25,405.95 969.03,411.84 970.66,417.52 971.98,422.54 972.84,426.5 973.16,429.1 972.88,430.14 971.5,428.32 968.85,422.81 965.38,414.7 961.69,405.64 958.41,397.46 956.07,391.83 954.98,389.9 954.92,391.05 955.47,394.19 956.49,399.01 957.82,405.08 959.29,411.8 960.68,418.54 961.82,424.65 962.56,429.55 962.8,432.75 962.47,433.96 961.41,432.39 959.56,427.59 957.15,420.31 954.49,411.68 951.92,403.02 949.75,395.67 948.22,390.78 947.45,389.12 947.35,390.63 947.8,394.84 948.65,401.25 949.7,409.1 950.77,417.46 951.65,425.34 952.19,431.8 952.27,436.06 951.85,437.61 951.01,436.31 949.76,432.36 948.23,426.25 946.55,418.71 944.88,410.68 943.35,403.12 942.1,396.95 941.17,392.94 940.61,391.58 940.36,392.72 940.33,395.97 940.45,400.99 940.66,407.32 940.86,414.34 941,421.35 941,427.69 940.84,432.73 940.49,435.99 939.96,437.14 939.26,435.79 938.42,431.84 937.49,425.75 936.57,418.26 935.69,410.29 934.92,402.8 934.27,396.68 933.74,392.7 933.32,391.32 932.95,392.44 932.59,395.68 932.22,400.72 931.79,407.06 931.3,414.09 930.74,421.12 930.1,427.46 929.43,432.48 928.74,435.7 928.08,436.8 927.51,434.55 927.12,428.29 926.92,419.26 926.87,409.25 926.87,400.22 926.8,393.97 926.53,391.72 926.04,392.77 925.38,395.89 924.54,400.75 923.53,406.88 922.4,413.67 921.19,420.45 919.98,426.54 918.83,431.36 917.84,434.43 917.06,435.43 916.75,432.43 917.14,424.39 918.03,413.46 919.04,402.53 919.74,394.53 919.75,391.56 919.22,392.35 918.41,394.78 917.33,398.64 916.01,403.6 914.51,409.26 912.91,415.15 911.28,420.78 909.75,425.7 908.38,429.48 907.28,431.84 906.5,432.56 906.32,430.33 907.02,424.36 908.39,415.81 910.06,406.36 911.62,397.85 912.62,391.94 912.74,389.76 912.07,390.72 910.87,393.66 909.17,398.29 907.07,404.13 904.73,410.61 902.32,417.05 900.04,422.84 898.06,427.37 896.55,430.21 895.62,431.06 895.65,428.78 896.93,422.77 899.12,414.19 901.72,404.72 904.11,396.2 905.69,390.27 906.02,388.07 905.27,388.95 903.82,391.73 901.72,396.12 899.13,401.67 896.24,407.82 893.29,413.93 890.51,419.41 888.15,423.68 886.41,426.33 885.42,427.08 885.37,425.63 886.32,421.9 888.11,416.32 890.48,409.55 893.12,402.4 895.63,395.69 897.66,390.21 898.89,386.58 899.1,385.22 898.3,386 896.63,388.56 894.18,392.63 891.15,397.78 887.77,403.47 884.33,409.13 881.13,414.19 878.45,418.12 876.51,420.53 875.49,421.18 875.74,419.46 877.44,415.11 880.31,408.77 883.84,401.38 887.45,394.03 890.52,387.79 892.48,383.58 892.97,381.98 892.08,382.68 890.15,385.11 887.29,388.98 883.74,393.88 879.79,399.3 875.78,404.68 872.07,409.46 868.98,413.17 866.78,415.41 865.68,415.95 866.28,413.87 868.99,408.73 873.2,401.49 878.02,393.56 882.4,386.42 885.36,381.44 886.21,379.51 885.36,379.98 883.52,381.79 880.78,384.76 877.33,388.61 873.39,393.01 869.25,397.57 865.22,401.89 861.59,405.6 858.62,408.38 856.55,409.98 855.51,410.26 856.4,408.13 859.85,402.94 865.14,395.67 871.13,387.71 876.58,380.57 880.29,375.58 881.42,373.63 880.39,374.19 877.96,376.3 874.31,379.71 869.74,384.03 864.67,388.8 859.55,393.52 854.84,397.7 850.98,400.89 848.32,402.77 847.1,403.11 847.88,401.45 850.93,397.52 855.76,391.9 861.58,385.4 867.47,378.95 872.47,373.5 875.75,369.78 876.74,368.31 875.72,368.75 873.23,370.53 869.47,373.43 864.77,377.12 859.55,381.19 854.29,385.22 849.48,388.76 845.55,391.45 842.87,393 841.69,393.23 842.19,392.01 844.4,389.4 848.01,385.66 852.56,381.21 857.47,376.56 862.11,372.22 865.87,368.65 868.26,366.23 868.94,365.19 867.79,365.56 864.93,367.23 860.66,369.91 855.45,373.24 849.89,376.75 844.61,379.97 840.22,382.47 837.22,383.91 835.95,384.09 836.51,382.97 838.79,380.68 842.48,377.45 847.13,373.65 852.12,369.68 856.83,365.97 860.66,362.92 863.09,360.83 863.8,359.89 862.66,360.09 859.8,361.34 855.54,363.42 850.34,366.02 844.79,368.75 839.52,371.24 835.15,373.12 832.17,374.13 830.93,374.11 831.54,373.09 833.86,371.12 837.59,368.41 842.26,365.24 847.27,361.95 851.99,358.88 855.83,356.35 858.28,354.58 859.01,353.74 857.92,353.79 855.16,354.68 851.02,356.2 845.97,358.12 840.58,360.14 835.48,361.95 831.26,363.28 828.41,363.93 827.25,363.79 828.16,362.71 831.24,360.69 835.99,357.99 841.67,354.96 847.38,351.98 852.21,349.45 855.4,347.65 856.42,346.77 855.46,346.69 852.99,347.19 849.22,348.16 844.5,349.45 839.27,350.88 834.02,352.25 829.25,353.39 825.41,354.14 822.87,354.4 821.86,354.1 822.69,353.2 825.43,351.68 829.74,349.68 835.09,347.39 840.81,345.05 846.2,342.88 850.59,341.08 853.42,339.78 854.33,339.09 853.35,338.93 850.72,339.22 846.7,339.87 841.65,340.75 836.05,341.72 830.44,342.63 825.35,343.35 821.28,343.76 818.61,343.79 817.59,343.4 819.18,342.36 823.93,340.63 830.86,338.47 838.59,336.24 845.57,334.25 850.38,332.78 852.04,331.98 851.22,331.71 848.98,331.69 845.49,331.87 841.03,332.19 835.95,332.56 830.64,332.92 825.55,333.18 821.06,333.31 817.55,333.24 815.29,332.96 814.46,332.46 815.82,331.67 819.87,330.57 825.97,329.26 833.18,327.88 840.41,326.57 846.54,325.46 850.63,324.61 852.04,324.06 851.03,323.75 848.18,323.58 843.76,323.51 838.2,323.47 832.03,323.43 825.86,323.32 820.29,323.11 815.87,322.79 813.01,322.34 812.01,321.78 813.22,321.12 816.74,320.4 822.16,319.66 828.81,318.95 835.9,318.3 842.56,317.72 847.99,317.22 851.53,316.78 852.77,316.38 851.54,315.97 848.03,315.53 842.65,315.01 836.04,314.42 829.02,313.74 822.43,313.01 817.06,312.26 813.57,311.53 812.37,310.87 813.64,310.32 817.23,309.91 822.72,309.66 829.44,309.55 836.59,309.55 843.31,309.58 848.79,309.58 852.38,309.46 853.65,309.17 852.43,308.63 848.85,307.83 843.34,306.78 836.58,305.53 829.4,304.15 822.67,302.75 817.21,301.44 813.67,300.34 812.51,299.54 814.27,299.13 819.1,299.22 826.28,299.74 834.72,300.54 843.15,301.44 850.3,302.2 855.09,302.61 856.83,302.51 855.83,301.92 852.82,300.93 848.09,299.55 842.12,297.86 835.51,295.98 828.92,294.02 823,292.15 818.34,290.5 815.41,289.2 814.49,288.36 815.89,288.08 819.63,288.39 825.28,289.24 832.17,290.47 839.47,291.88 846.33,293.25 851.93,294.35 855.61,294.96 856.96,294.93 855.85,294.17 852.46,292.72 847.22,290.65 840.79,288.15 833.96,285.45 827.57,282.81 822.42,280.5 819.14,278.76 818.14,277.75 819.61,277.62 823.47,278.34 829.26,279.8 836.31,281.79 843.76,284 850.76,286.12 856.47,287.84 860.24,288.86 861.63,288.99 860.51,288.14 857.04,286.31 851.66,283.66 845.06,280.43 838.06,276.94 831.52,273.58 826.25,270.68 822.91,268.57 821.92,267.47 823.33,267.44 826.91,268.42 832.24,270.26 838.71,272.7 845.54,275.39 851.95,277.96 857.18,280.03 860.65,281.28 861.97,281.49 861.27,280.7 858.93,279.04 855.21,276.62 850.48,273.63 845.26,270.3 840.06,266.92 835.43,263.77 831.83,261.14 829.64,259.24 829.08,258.24 830.38,258.3 833.57,259.48 838.28,261.58 843.97,264.33 849.97,267.34 855.59,270.21 860.19,272.51 863.25,273.92 864.45,274.2 863.9,273.35 861.9,271.55 858.67,268.92 854.57,265.66 850.04,262.05 845.54,258.38 841.54,254.98 838.46,252.15 836.62,250.14 836.23,249.11 838.2,249.73 843.02,252.44 849.79,256.65 857.2,261.45 863.87,265.81 868.53,268.76 870.35,269.61 869.84,268.7 867.9,266.66 864.77,263.63 860.79,259.86 856.38,255.68 852.02,251.45 848.15,247.55 845.19,244.33 843.45,242.08 843.11,240.99 844.52,241.39 847.78,243.42 852.42,246.72 857.78,250.75 863.1,254.84 867.62,258.3 870.72,260.52 871.99,261.11 871.66,260.2 870.15,258.17 867.65,255.14 864.45,251.39 860.91,247.23 857.42,243.03 854.34,239.16 852.02,235.99 850.7,233.78 850.54,232.73 851.92,233.31 855.04,235.73 859.47,239.61 864.56,244.3 869.61,249.04 873.89,253.05 876.84,255.66 878.07,256.41 877.63,255.23 875.76,252.39 872.74,248.17 869.01,243.01 865.08,237.51 861.46,232.27 858.65,227.89 857.01,224.87 856.79,223.55 858.05,224.16 860.79,226.67 864.69,230.74 869.33,235.86 874.19,241.37 878.72,246.58 882.43,250.81 884.94,253.5 886.02,254.3 885.72,253.21 884.26,250.5 881.85,246.38 878.77,241.22 875.37,235.49 872.02,229.73 869.1,224.47 866.92,220.21 865.72,217.34 865.65,216.12 867.03,217.13 869.98,220.62 874.11,226.04 878.82,232.54 883.47,239.08 887.41,244.62 890.13,248.28 891.3,249.43 891.12,248.33 889.96,245.51 887.98,241.22 885.44,235.85 882.64,229.89 879.9,223.9 877.54,218.44 875.81,214.02 874.93,211.07 875,209.85 876.37,211.07 879.19,215.11 883.06,221.34 887.45,228.78 891.75,236.27 895.4,242.62 897.93,246.82 899.04,248.19 898.82,246.77 897.52,242.98 895.38,237.25 892.73,230.24 889.96,222.76 887.47,215.68 885.59,209.85 884.6,205.94 884.66,204.42 885.75,205.45 887.8,208.88 890.59,214.28 893.84,220.98 897.18,228.16 900.29,234.92 902.83,240.42 904.6,243.98 905.43,245.14 905.36,243.79 904.49,240.16 903.01,234.66 901.17,227.91 899.25,220.73 897.54,213.94 896.3,208.37 895.72,204.65 895.9,203.24 896.78,204.04 898.21,206.7 900.08,210.95 902.25,216.36 904.53,222.4 906.75,228.46 908.74,233.93 910.36,238.27 911.52,241.02 912.15,241.91 912.23,240.63 911.77,237.12 910.9,231.78 909.8,225.24 908.67,218.28 907.7,211.72 907.07,206.33 906.88,202.77 907.21,201.45 908.04,202.51 909.3,205.8 910.88,210.91 912.63,217.21 914.4,223.95 916.02,230.28 917.37,235.44 918.36,238.8 918.95,239.92 919.18,238.87 919.14,235.94 918.88,231.41 918.51,225.7 918.11,219.38 917.77,213.06 917.57,207.34 917.58,202.78 917.82,199.83 918.3,198.77 919.02,199.89 919.97,203.26 921.05,208.47 922.19,214.87 923.3,221.7 924.31,228.12 925.16,233.36 925.83,236.77 926.31,237.94 926.66,236.92 926.91,234.02 927.11,229.52 927.3,223.86 927.53,217.58 927.83,211.31 928.2,205.64 928.67,201.15 929.21,198.25 929.81,197.25 930.68,201.21 931.5,205.18Z" fill="none" stroke="#000" stroke-width="1.9" stroke-linejoin="round"/>
<g stroke="#5a5ae0" stroke-opacity="0.85" stroke-width="2.5"><line x1="1049" y1="282" x2="1061" y2="282"/><line x1="1055" y1="276" x2="1055" y2="288"/><line x1="989" y1="299" x2="1001" y2="299"/><line x1="995" y1="293" x2="995" y2="305"/></g>
</svg>
<div class="ax" style="right:1030px;top:134px">0,0035</div>
<div class="ax" style="right:1030px;top:169px">0,0028</div>
<div class="ax" style="right:1030px;top:204px">0,0021</div>
<div class="ax" style="right:1030px;top:239px">0,0014</div>
<div class="ax" style="right:1030px;top:275px">0,0007</div>
<div class="ax" style="right:1030px;top:310px;font-size:13px;top:308px">ø</div>
<div class="ax" style="right:1030px;top:345px">-0,0007</div>
<div class="ax" style="right:1030px;top:380px">-0,0014</div>
<div class="ax" style="right:1030px;top:415px">-0,0021</div>
<div class="ax" style="right:1030px;top:450px">-0,0028</div>
<div class="ax" style="right:1030px;top:486px">-0,0035</div>
<div class="ax" style="left:81.5px;top:500px;width:60px;margin-left:-28px;text-align:center">0°</div>
<div class="ax" style="left:235.5px;top:500px;width:60px;margin-left:-28px;text-align:center">90°</div>
<div class="ax" style="left:390.5px;top:500px;width:60px;margin-left:-28px;text-align:center">180°</div>
<div class="ax" style="left:545.5px;top:500px;width:60px;margin-left:-28px;text-align:center">270°</div>
<div class="ax" style="left:700.5px;top:500px;width:60px;margin-left:-28px;text-align:center">360°</div>
<div class="ax" style="right:405px;top:124px;font-size:11.7px;color:#404040">Filterbreite: 1 Zahn</div>
<div class="ax" style="left:716px;top:310px;font-size:11.2px;color:#3030b0;line-height:14px">0,0023</div>
<div class="ax" style="right:175px;top:166px">360°</div>
<div class="ax" style="left:935px;top:166px">0°</div>
<div class="ax" style="right:305px;top:310px">270°</div>
<div class="ax" style="left:1068px;top:310px">90°</div>
<div class="ax" style="left:921px;top:453px">180°</div>
<!-- table -->
<table><colgroup><col style="width:325px"><col style="width:108px"><col style="width:108px"><col style="width:126px"><col style="width:126px"><col style="width:126px"><col style="width:162px"></colgroup>
<tr style="background:#ececf0;text-align:center"><td>Merkmal</td><td>Soll-Q.</td><td>Ist-Q.</td><td>Toleranz</td><td>Eingriffsgrenze</td><td>Istwert</td><td>Tol. Balken</td></tr>
<tr><td style="background:#efefef;position:relative">Wälzfehler<span style="position:absolute;left:288px;top:5px">Fis</span></td><td style="background:#ffffff;text-align:center">7*</td><td style="background:#c1ecc1;text-align:center">4</td><td style="background:#fff;text-align:right">0,0360</td><td style="background:#fff;text-align:right">---</td><td style="background:#c1ecc1;text-align:right">0,0147</td><td style="background:#c1ecc1;position:relative"><div class="a" style="left:13px;top:6px;width:108px;height:11px;border:1px solid #505a50"></div><div class="a" style="left:14px;top:7px;width:43px;height:9px;background:#007400"></div></td></tr>
<tr><td style="background:#efefef;position:relative">Wälzsprung<span style="position:absolute;left:288px;top:5px">fis</span></td><td style="background:#ffffff;text-align:center">7*</td><td style="background:#c1ecc1;text-align:center">2</td><td style="background:#fff;text-align:right">0,0160</td><td style="background:#fff;text-align:right">---</td><td style="background:#c1ecc1;text-align:right">0,0026</td><td style="background:#c1ecc1;position:relative"><div class="a" style="left:13px;top:6px;width:108px;height:11px;border:1px solid #505a50"></div><div class="a" style="left:14px;top:7px;width:17px;height:9px;background:#007400"></div></td></tr>
<tr><td style="background:#efefef;position:relative">Langwelliger Anteil<span style="position:absolute;left:288px;top:5px">fl</span></td><td style="background:#efefef;text-align:center"></td><td style="background:#efefef;text-align:center"></td><td style="background:#fff;text-align:right">0,0300</td><td style="background:#fff;text-align:right">---</td><td style="background:#c1ecc1;text-align:right">0,0128</td><td style="background:#c1ecc1;position:relative"><div class="a" style="left:13px;top:6px;width:108px;height:11px;border:1px solid #505a50"></div><div class="a" style="left:14px;top:7px;width:45px;height:9px;background:#007400"></div></td></tr>
<tr><td style="background:#efefef;position:relative">Kurzwelliger Anteil<span style="position:absolute;left:288px;top:5px">fk</span></td><td style="background:#efefef;text-align:center"></td><td style="background:#efefef;text-align:center"></td><td style="background:#fff;text-align:right">0,0060</td><td style="background:#fff;text-align:right">---</td><td style="background:#c1ecc1;text-align:right">0,0023</td><td style="background:#c1ecc1;position:relative"><div class="a" style="left:13px;top:6px;width:108px;height:11px;border:1px solid #505a50"></div><div class="a" style="left:14px;top:7px;width:41px;height:9px;background:#007400"></div></td></tr>
</table>
<div class="a" style="left:949px;top:541px;width:1px;height:92px;background:#505a50"></div>
<!-- status bar -->
<div class="a" style="left:13px;top:634px;width:1088px;height:3px;background:#1e1e20"></div>
<div class="a" style="left:13px;top:637px;width:1088px;height:1px;background:#48474e"></div>
<div class="a" style="left:13px;top:638px;width:1088px;height:24px;background:#2e2d37"></div>
<div class="a" style="left:13px;top:662px;width:1088px;height:1px;background:#56565b"></div>
<div class="a" style="left:13px;top:663px;width:1088px;height:3px;background:#1e1e20"></div>
<svg class="a" style="left:19px;top:640px" width="20" height="20" viewBox="0 0 20 20"><g transform="translate(10,10)"><path d="M-2.04,-6.59 -1.56,-9.07 1.56,-9.07 2.04,-6.59 3.22,-6.10 5.31,-7.51 7.51,-5.31 6.10,-3.22 6.59,-2.04 9.07,-1.56 9.07,1.56 6.59,2.04 6.10,3.22 7.51,5.31 5.31,7.51 3.22,6.10 2.04,6.59 1.56,9.07 -1.56,9.07 -2.04,6.59 -3.22,6.10 -5.31,7.51 -7.51,5.31 -6.10,3.22 -6.59,2.04 -9.07,1.56 -9.07,-1.56 -6.59,-2.04 -6.10,-3.22 -7.51,-5.31 -5.31,-7.51 -3.22,-6.10Z" fill="#3c3c3e" stroke="#f2f2f2" stroke-width="1.4" stroke-linejoin="round"/><circle r="2.9" fill="none" stroke="#f6f6f6" stroke-width="1.9"/></g></svg>
<div class="led" style="left:54.5px"></div>
<div class="st" style="left:73.4px">Not-Aus</div>
<div class="led" style="left:143.5px"></div>
<div class="st" style="left:162.5px">Messung</div>
<div class="led" style="left:235.2px"></div>
<div class="st" style="left:254.5px">Messdrehzahl</div>
<div class="led" style="left:420.2px"></div>
<div class="st" style="left:439px">Dreh links</div>
<div class="led" style="left:516px"></div>
<div class="st" style="left:535px">Dreh rechts</div>
<div class="led" style="left:620px"></div>
<div class="st" style="left:639px">Messung fertig</div>
<div class="led" style="left:748.5px;background:radial-gradient(circle at 50% 35%,#a0ffa0 0%,#30d030 45%,#108010 100%)"></div>
<div class="st" style="left:768px">OPC UA</div>
<div class="led" style="left:835.5px"></div>
<div class="st" style="left:854.5px">Remote</div>
<div class="st" style="left:347.7px"><i>Status:</i> <b>7</b></div>
<div class="a" style="left:733px;top:641px;width:1px;height:19px;background:#44434a"></div>
</body></html>
